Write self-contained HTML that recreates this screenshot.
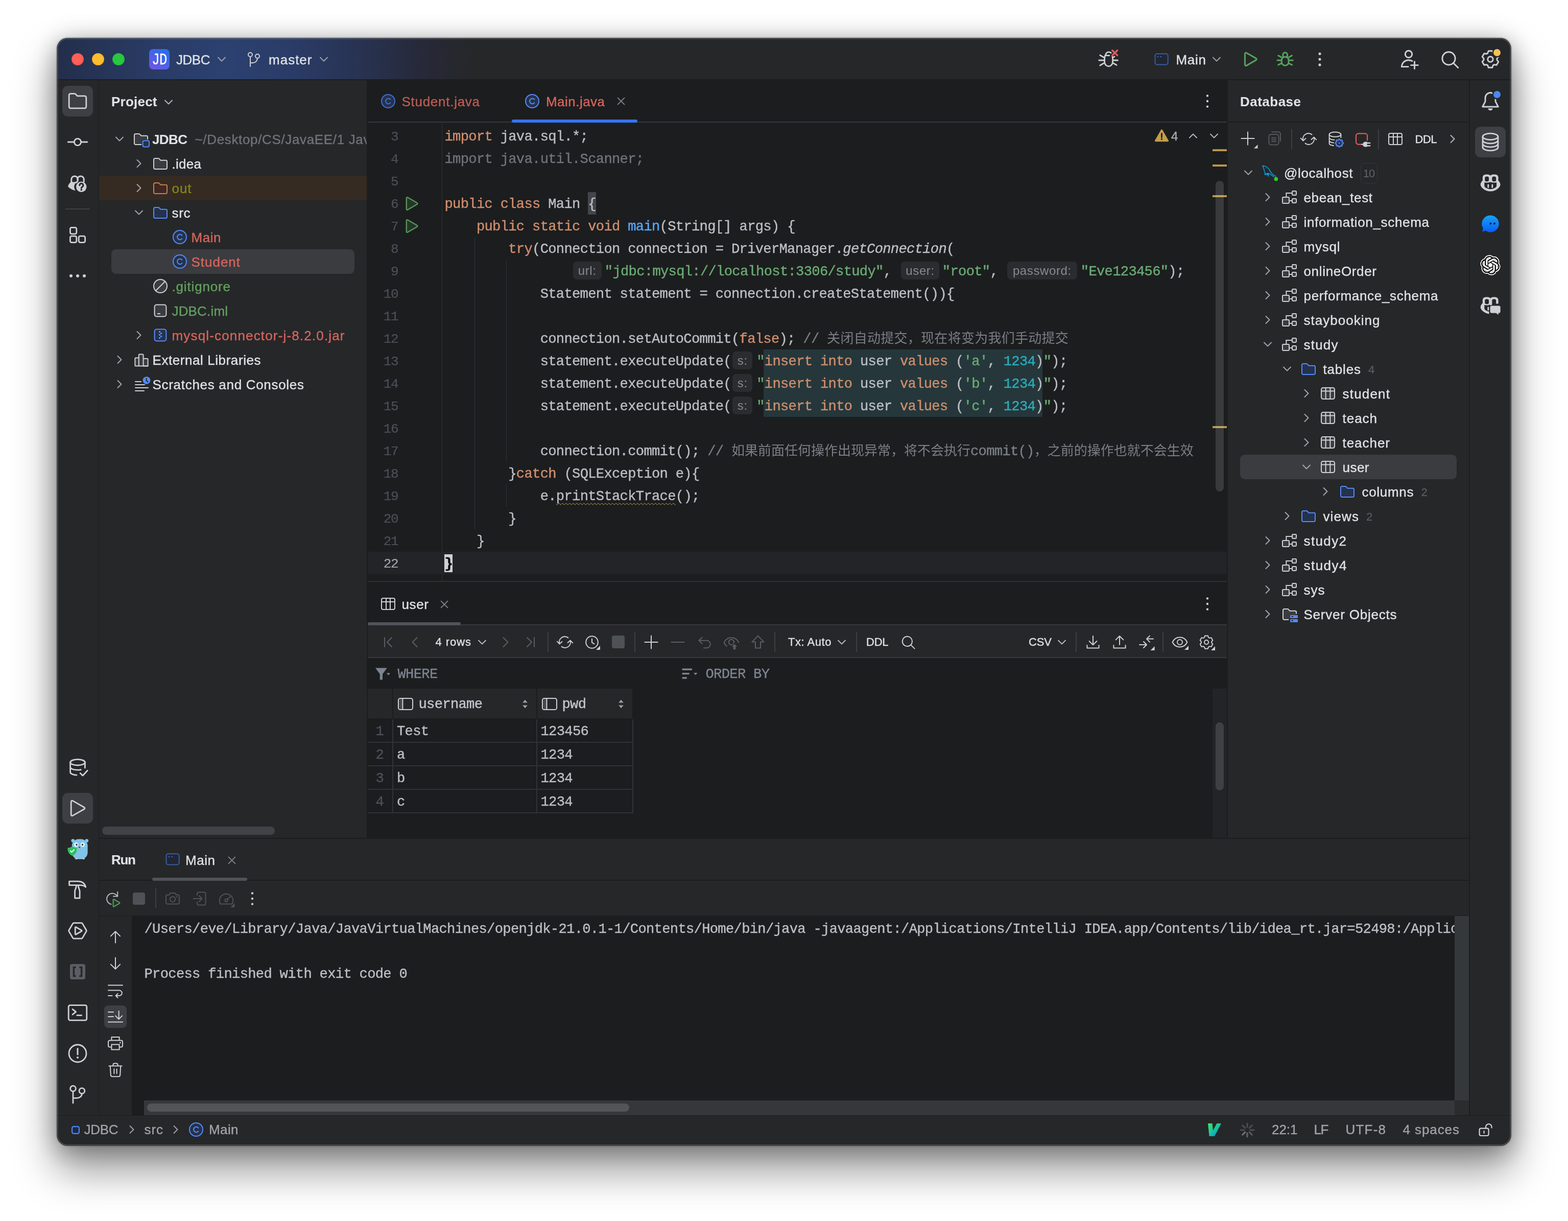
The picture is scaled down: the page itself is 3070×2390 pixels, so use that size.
<!DOCTYPE html>
<html lang="en"><head><meta charset="utf-8"><title>JDBC – Main.java</title>
<style>
html,body{margin:0;padding:0;background:#fff;}
body{width:3070px;height:2390px;overflow:hidden;position:relative;}
#win{position:absolute;left:112px;top:75px;width:2846px;height:2167px;border-radius:20px;overflow:hidden;background:#262729;
 box-shadow:0 0 0 1px rgba(0,0,0,.6),0 0 5px rgba(0,0,0,.3),0 0 50px rgba(0,0,0,.16),0 44px 80px 6px rgba(0,0,0,.40),0 12px 40px rgba(0,0,0,.16);}
#in{will-change:transform;position:absolute;left:-112px;top:-75px;width:3070px;height:2390px;}
.a{position:absolute;display:block;white-space:pre;margin:0;padding:0;}
.ui{font-family:"Liberation Sans","Noto Sans CJK SC",sans-serif;font-size:26px;color:#DFE1E5;}
.b{font-weight:bold;}
.mono{font-family:"Liberation Mono","Noto Sans CJK SC",monospace;font-size:27.2px;letter-spacing:-0.72px;color:#BCBEC4;-webkit-text-stroke:0.4px currentColor;}
.k{color:#CF8E6D}.s{color:#6AAB73}.n{color:#2AACB8}.m{color:#56A8F5}.c{color:#7A7E85}.g{color:#6F737A}
.ui{-webkit-text-stroke:0.36px currentColor;}
.cl{height:44px;line-height:44px;}
.cl i{font-style:italic;}
.hint{display:inline-block;box-sizing:border-box;height:35px;line-height:36px;vertical-align:middle;position:relative;top:-2.5px;background:#2A2C30;border-radius:7px;color:#868A91;font-family:"Liberation Sans",sans-serif;font-size:24px;letter-spacing:.6px;text-align:center;-webkit-text-stroke:0;}
.cj{font-size:26px;letter-spacing:0;-webkit-text-stroke:0;}
.cj12{letter-spacing:.28px;}
.wavy{text-decoration:underline wavy #C9A24D 1.2px;text-underline-offset:5px;text-decoration-skip-ink:none;}
svg.a{overflow:visible;}
#rim{position:absolute;left:0;top:0;width:2846px;height:2167px;border-radius:20px;box-shadow:inset 0 0 0 1.5px rgba(255,255,255,.2);pointer-events:none;}
.ui.b{-webkit-text-stroke:0.1px currentColor;}

</style></head>
<body>
<div id="win"><div id="in">
<div class="a " style="left:112px;top:75px;width:2846px;height:81px;background:#262729;background:linear-gradient(90deg,#232E4B 0px,#2A3C67 200px,#2C4170 330px,#2A3B66 470px,#283250 600px,#27293A 710px,#262729 810px);"></div>
<div class="a " style="left:112px;top:155px;width:2846px;height:2px;background:#1C1D1F;"></div>
<div class="a " style="left:112px;top:157px;width:81px;height:2026px;background:#262729;"></div>
<div class="a " style="left:193px;top:157px;width:1px;height:2026px;background:#1C1D1F;"></div>
<div class="a " style="left:194px;top:157px;width:524px;height:1483px;background:#262729;"></div>
<div class="a " style="left:718px;top:157px;width:2px;height:1483px;background:#1C1D1F;"></div>
<div class="a " style="left:720px;top:157px;width:1682px;height:1483px;background:#1C1D1F;"></div>
<div class="a " style="left:2402px;top:157px;width:2px;height:1483px;background:#1C1D1F;"></div>
<div class="a " style="left:2404px;top:157px;width:473px;height:1483px;background:#262729;"></div>
<div class="a " style="left:2876px;top:157px;width:2px;height:2026px;background:#1C1D1F;"></div>
<div class="a " style="left:2878px;top:157px;width:80px;height:2026px;background:#262729;"></div>
<div class="a " style="left:194px;top:1640px;width:2682px;height:2px;background:#1C1D1F;"></div>
<div class="a " style="left:194px;top:1642px;width:2682px;height:541px;background:#262729;"></div>
<div class="a " style="left:112px;top:2183px;width:2846px;height:1px;background:#1C1D1F;"></div>
<div class="a " style="left:112px;top:2184px;width:2846px;height:58px;background:#262729;"></div>
<div class="a " style="left:140px;top:104px;width:24px;height:24px;background:#FE5F57;border-radius:50%;box-shadow:inset 0 0 0 1px rgba(0,0,0,.12);"></div>
<div class="a " style="left:180px;top:104px;width:24px;height:24px;background:#FEBC2E;border-radius:50%;box-shadow:inset 0 0 0 1px rgba(0,0,0,.12);"></div>
<div class="a " style="left:220px;top:104px;width:24px;height:24px;background:#28C840;border-radius:50%;box-shadow:inset 0 0 0 1px rgba(0,0,0,.12);"></div>
<div class="a " style="left:292px;top:96px;width:40px;height:40px;border-radius:8px;background:linear-gradient(35deg,#6B57E3 10%,#2470EB 95%);"></div>
<span class="a mono" id="t1" style="top:97.5px;line-height:40px;height:40px;left:292px;color:#fff;width:40px;text-align:center;font-size:32px;transform:scaleX(.8);-webkit-text-stroke:.3px #fff;">JD</span>
<span class="a ui" id="t2" style="top:92.5px;line-height:48px;height:48px;left:345px;letter-spacing:-0.469px;">JDBC</span>
<svg class="a" style="left:418.0px;top:100.0px;" width="32" height="32" viewBox="0 0 16 16" fill="none"><path d="M4.5 6.25L8 9.75L11.5 6.25" stroke="#9DA0A8" stroke-width="1" fill="none" stroke-linecap="round" stroke-linejoin="round" /></svg>
<svg class="a" style="left:477.0px;top:96.0px;" width="40" height="40" viewBox="0 0 20 20" fill="none"><circle cx="6.5" cy="5.5" r="2" stroke="#CED0D6"/><circle cx="13.5" cy="7" r="2" stroke="#CED0D6"/><path d="M6.5 7.5V17M6.5 13.5h2.5a4.5 4.5 0 0 0 4.5-4.5" stroke="#CED0D6" stroke-linecap="round"/></svg>
<span class="a ui" id="t3" style="top:92.5px;line-height:48px;height:48px;left:526px;letter-spacing:1.006px;">master</span>
<svg class="a" style="left:618.0px;top:100.0px;" width="32" height="32" viewBox="0 0 16 16" fill="none"><path d="M4.5 6.25L8 9.75L11.5 6.25" stroke="#9DA0A8" stroke-width="1" fill="none" stroke-linecap="round" stroke-linejoin="round" /></svg>
<svg class="a" style="left:2149.0px;top:96.0px;" width="40" height="40" viewBox="0 0 20 20" fill="none"><path d="M7.400 6.300C7 7.300 6.800 8.300 6.800 9.500V12.400a4 4.500 0 0 0 8 0V9.500c0-.7-.1-1.300-.3-1.900M7.600 6.300c.3-1.900 1.600-3.400 3.300-3.400.9 0 1.600.3 2.200.8M7.600 6.300H11.500M2.400 6L5.800 8M1.400 11H5.800M2.400 16L5.800 14M16 11h3.700M15.700 14l2.900 1.700M15.800 7.900l.7-.5" stroke="#CED0D6" stroke-width="1.400" stroke-linecap="round" fill="none"/><path d="M14.400 1.300l4.900 4.800M19.300 1.300l-4.900 4.800" stroke="#E0555B" stroke-width="1.800" stroke-linecap="round"/></svg>
<svg class="a" style="left:2258.0px;top:100.0px;" width="32" height="32" viewBox="0 0 16 16" fill="none"><rect x="1.75" y="2.6" width="12.6" height="10.6" rx="2" stroke="#3A5C9E" fill="#212634"/><path d="M3.8 5.5H5.3M6.6 5.5H8.2" stroke="#3A5C9E"/></svg>
<span class="a ui" id="t4" style="top:92.5px;line-height:48px;height:48px;left:2302.5px;letter-spacing:0.714px;">Main</span>
<svg class="a" style="left:2366.0px;top:100.0px;" width="32" height="32" viewBox="0 0 16 16" fill="none"><path d="M4.5 6.25L8 9.75L11.5 6.25" stroke="#9DA0A8" stroke-width="1" fill="none" stroke-linecap="round" stroke-linejoin="round" /></svg>
<svg class="a" style="left:2428.0px;top:96.0px;" width="40" height="40" viewBox="0 0 20 20" fill="none"><path d="M4.750 4.600a1 1 0 0 1 1.500-.87l9.300 5.350a1 1 0 0 1 0 1.740l-9.300 5.350a1 1 0 0 1-1.500-.87z" stroke="#55A35D" stroke-width="1.500" stroke-linejoin="round"/></svg>
<svg class="a" style="left:2496.0px;top:96.0px;" width="40" height="40" viewBox="0 0 20 20" fill="none"><path d="M6.650 10.900a3.430 3.300 0 0 1 6.860 0v1.800a3.430 3.400 0 0 1-6.860 0zM7.950 7.700V5.550a2.130 2.130 0 0 1 4.260 0V7.700" stroke="#55A35D" stroke-width="1.500"/><path d="M3.350 6.350L6.250 7.950M2.500 11.050H5.900M3.350 15.500L6.250 14.050M16.800 6.350L13.900 7.950M17.650 11.050H14.250M16.800 15.500L13.900 14.050" stroke="#55A35D" stroke-width="1.500" stroke-linecap="round"/></svg>
<svg class="a" style="left:2564.0px;top:96.0px;" width="40" height="40" viewBox="0 0 20 20" fill="none"><circle cx="10" cy="4.65" r="1.280" fill="#CED0D6"/><circle cx="10" cy="10" r="1.280" fill="#CED0D6"/><circle cx="10" cy="15.45" r="1.280" fill="#CED0D6"/></svg>
<svg class="a" style="left:2740.0px;top:97.0px;" width="40" height="40" viewBox="0 0 20 20" fill="none"><circle cx="9" cy="4.500" r="3.350" stroke="#CED0D6" stroke-width="1.450"/><path d="M8.600 16.800H2.250c0-3.600 2.800-6.450 6.750-6.450 1.300 0 2.500.3 3.500.85M11.300 15.300h6.900M14.750 11.850v6.900" stroke="#CED0D6" stroke-width="1.450" stroke-linecap="round"/></svg>
<svg class="a" style="left:2818.5px;top:96.5px;" width="40" height="40" viewBox="0 0 20 20" fill="none"><circle cx="8.750" cy="8.700" r="6.300" stroke="#CED0D6" stroke-width="1.450"/><path d="M13.200 13.150l4.700 4.600" stroke="#CED0D6" stroke-width="1.450" stroke-linecap="round"/></svg>
<svg class="a" style="left:2898.0px;top:96.0px;" width="40" height="40" viewBox="0 0 20 20" fill="none"><path d="M8.13 1.91L11.87 1.91L12.64 4.06L13.82 4.74L16.07 4.34L17.94 7.57L16.46 9.32L16.46 10.68L17.94 12.43L16.07 15.66L13.82 15.26L12.64 15.94L11.87 18.09L8.13 18.09L7.36 15.94L6.18 15.26L3.93 15.66L2.06 12.43L3.54 10.68L3.54 9.32L2.06 7.57L3.93 4.34L6.18 4.74L7.36 4.06Z" stroke="#CED0D6" stroke-width="1.45" stroke-linejoin="round"/><circle cx="10" cy="10" r="2.6" stroke="#CED0D6" stroke-width="1.45"/></svg>
<div class="a " style="left:2924px;top:96px;width:14px;height:14px;background:#F2C057;border-radius:50%;box-shadow:0 0 0 2.500px #262729;"></div>
<div class="a " style="left:122px;top:168px;width:60px;height:60px;background:#3D3F44;border-radius:11px;"></div>
<svg class="a" style="left:132.0px;top:178.0px;" width="40" height="40" viewBox="0 0 20 20" fill="none"><path d="M1.6 4.2a1.5 1.5 0 0 1 1.5-1.5h3.9a1.5 1.5 0 0 1 1.1.5l1.5 1.7h7.3a1.5 1.5 0 0 1 1.5 1.5v9a1.5 1.5 0 0 1-1.5 1.5H3.1a1.5 1.5 0 0 1-1.5-1.5z" stroke="#CED0D6" stroke-width="1.4" fill="none" stroke-linecap="round" stroke-linejoin="round" /></svg>
<svg class="a" style="left:132.0px;top:258.0px;" width="40" height="40" viewBox="0 0 20 20" fill="none"><path d="M0.6 10H6.2M13.8 10H19.4" stroke="#CED0D6" stroke-width="1.4" fill="none" stroke-linecap="round" stroke-linejoin="round" /><circle cx="10" cy="10" r="3.3" stroke="#CED0D6" stroke-width="1.4"/></svg>
<svg class="a" style="left:132.0px;top:339.0px;" width="40" height="40" viewBox="0 0 20 20" fill="none"><path d="M3.9 9.4V5.9a2.9 2.9 0 0 1 2.9-2.9h.5a2.9 2.9 0 0 1 2.9 2.9v.6a2.9 2.9 0 0 1-2.9 2.9z" stroke="#CED0D6" stroke-width="1.5" fill="none" stroke-linecap="round" stroke-linejoin="round" /><path d="M16.1 8.3V5.9a2.9 2.9 0 0 0-2.9-2.9h-.5a2.9 2.9 0 0 0-2.9 2.9" stroke="#CED0D6" stroke-width="1.5" fill="none" stroke-linecap="round" stroke-linejoin="round" /><path d="M3.2 8.6c-1.7 1.6-2.6 3.2-2.6 4.6 1.8 1.9 4.3 3.2 7.4 3.8a5.4 5.4 0 0 1-.3-6.9l-1 .2z" fill="#CED0D6"/><circle cx="13.6" cy="13.4" r="5.1" fill="#CED0D6"/><path d="M11.9 11.9a1.75 1.75 0 1 1 2.6 1.5c-.6.35-.85.6-.85 1.2" stroke="#262729" stroke-width="1.5" fill="none" stroke-linecap="round"/><circle cx="13.65" cy="16.3" r=".9" fill="#262729"/></svg>
<div class="a " style="left:128px;top:408px;width:48px;height:2px;background:#3E4044;"></div>
<svg class="a" style="left:132.0px;top:440.0px;" width="40" height="40" viewBox="0 0 20 20" fill="none"><rect x="2.7" y="2.7" width="6.2" height="6.2" rx="1.4" stroke="#CED0D6" stroke-width="1.4"/><rect x="2.7" y="11.1" width="6.2" height="6.2" rx="1.4" stroke="#CED0D6" stroke-width="1.4"/><rect x="11.1" y="11.1" width="6.2" height="6.2" rx="1.4" stroke="#CED0D6" stroke-width="1.4"/></svg>
<div class="a " style="left:136px;top:537px;width:6px;height:6px;background:#CED0D6;border-radius:50%;"></div>
<div class="a " style="left:149px;top:537px;width:6px;height:6px;background:#CED0D6;border-radius:50%;"></div>
<div class="a " style="left:162px;top:537px;width:6px;height:6px;background:#CED0D6;border-radius:50%;"></div>
<svg class="a" style="left:133.5px;top:1482.5px;" width="40" height="40" viewBox="0 0 20 20" fill="none"><ellipse cx="9" cy="4.6" rx="7.2" ry="2.9" stroke="#CED0D6" stroke-width="1.4"/><path d="M1.8 4.6v9.6c0 1.5 2.6 2.8 6.2 2.9M16.2 4.6v5.4M1.8 9.3c0 1.5 3 2.8 7.2 2.8 1.2 0 2.3-.1 3.2-.3M11.6 15.2l2.4 2.4 4.6-5" stroke="#CED0D6" stroke-width="1.4" fill="none" stroke-linecap="round" stroke-linejoin="round" /></svg>
<div class="a " style="left:122px;top:1552px;width:60px;height:60px;background:#3D3F44;border-radius:11px;"></div>
<svg class="a" style="left:131.5px;top:1561.5px;" width="40" height="40" viewBox="0 0 20 20" fill="none"><path d="M3.6 3.6a1 1 0 0 1 1.5-.9l11.3 6.4a1 1 0 0 1 0 1.8L5.1 17.3a1 1 0 0 1-1.5-.9z" stroke="#CED0D6" stroke-width="1.4" fill="none" stroke-linecap="round" stroke-linejoin="round" /></svg>
<svg class="a" style="left:131.5px;top:1641.0px;" width="41" height="41" viewBox="0 0 20.5 20.5" fill="none"><circle cx="5.400" cy="2.300" r="1.700" fill="#7FC4EA"/><circle cx="18.900" cy="2.300" r="1.700" fill="#7FC4EA"/><rect x="4.400" y="0.700" width="15.400" height="19.700" rx="6.500" fill="#7FC4EA"/><ellipse cx="8.700" cy="20" rx="1.300" ry=".5" fill="#E8D9B8"/><ellipse cx="15.800" cy="20" rx="1.300" ry=".5" fill="#E8D9B8"/><circle cx="8.600" cy="6.100" r="2.100" fill="#F2F4F6"/><circle cx="14.900" cy="6.100" r="2.100" fill="#F2F4F6"/><circle cx="9" cy="6.200" r=".9" fill="#4a3b36"/><circle cx="14.700" cy="6.200" r=".9" fill="#4a3b36"/><ellipse cx="11.700" cy="9.100" rx="1.300" ry=".8" fill="#C9A77C"/><ellipse cx="11.700" cy="8.700" rx=".8" ry=".55" fill="#4a2c22"/><path d="M0.100 9.300c1.900 0 3.500-.6 4.650-1.600 1.150 1 2.750 1.600 4.650 1.600 0 4.200-1.600 6.500-4.650 7.700C1.700 15.800.1 13.500.1 9.300z" fill="#2DBE5D"/><path d="M3.100 12.300l1.100 1.100 2.300-2.200" stroke="#E8FFF0" stroke-width="1.100" fill="none" stroke-linecap="round"/></svg>
<svg class="a" style="left:132.0px;top:1722.0px;" width="40" height="40" viewBox="0 0 20 20" fill="none"><path d="M1.800 1.600H10.500C14.500 1.600 16.900 3.600 17.900 7.150C16.300 5.900 14.400 5.350 12.500 5.350H1.800zM8.600 5.350V7L7.300 10.900V18H12.050V10.900L10.750 7V5.350" stroke="#CED0D6" stroke-width="1.4" fill="none" stroke-linecap="round" stroke-linejoin="round" /></svg>
<svg class="a" style="left:132.0px;top:1802.0px;" width="40" height="40" viewBox="0 0 20 20" fill="none"><path d="M6.300 2.350h7.400a1.200 1.200 0 0 1 1.040.600l3.750 6.400a1.200 1.200 0 0 1 0 1.200l-3.750 6.400a1.200 1.200 0 0 1-1.040.600H6.300a1.200 1.200 0 0 1-1.040-.600L1.510 10.550a1.200 1.200 0 0 1 0-1.200l3.750-6.400a1.200 1.200 0 0 1 1.040-.600z" stroke="#CED0D6" stroke-width="1.4" fill="none" stroke-linecap="round" stroke-linejoin="round" /><path d="M7.650 6.800a.5.500 0 0 1 .75-.430l5.400 3.150a.5.500 0 0 1 0 .860l-5.400 3.150a.5.500 0 0 1-.75-.430z" stroke="#CED0D6" stroke-width="1.4" fill="none" stroke-linecap="round" stroke-linejoin="round" /></svg>
<div class="a " style="left:137px;top:1887px;width:30px;height:30px;background:#5A5D63;border-radius:4px;"></div>
<svg class="a" style="left:132.0px;top:1882.0px;" width="40" height="40" viewBox="0 0 20 20" fill="none"><path d="M8.300 5.700H6.200v8.600h2.100M11.700 5.700h2.100v8.600h-2.100" stroke="#262729" stroke-width="1.700" fill="none"/></svg>
<svg class="a" style="left:132.0px;top:1962.0px;" width="40" height="40" viewBox="0 0 20 20" fill="none"><rect x="1.100" y="2.800" width="17.800" height="14.800" rx="1.600" stroke="#CED0D6" stroke-width="1.4"/><path d="M5 6.700l3.300 2.600L5 11.900M9.400 12.700h4.400" stroke="#CED0D6" stroke-width="1.4" fill="none" stroke-linecap="round" stroke-linejoin="round" /></svg>
<svg class="a" style="left:132.0px;top:2042.0px;" width="40" height="40" viewBox="0 0 20 20" fill="none"><circle cx="10" cy="10" r="8.500" stroke="#CED0D6" stroke-width="1.4"/><path d="M10 5.300v5.700" stroke="#CED0D6" stroke-width="1.5" fill="none" stroke-linecap="round" stroke-linejoin="round" /><circle cx="10" cy="14" r="1" fill="#CED0D6"/></svg>
<svg class="a" style="left:132.0px;top:2122.0px;" width="40" height="40" viewBox="0 0 20 20" fill="none"><circle cx="5.500" cy="4.400" r="2.700" stroke="#CED0D6" stroke-width="1.4"/><circle cx="14.200" cy="6.600" r="2.700" stroke="#CED0D6" stroke-width="1.4"/><path d="M5.500 7.100V18.500M5.500 13.700h3.500c3 0 5.200-1.700 5.200-4.400" stroke="#CED0D6" stroke-width="1.4" fill="none" stroke-linecap="round" stroke-linejoin="round" /></svg>
<svg class="a" style="left:2898.0px;top:178.0px;" width="40" height="40" viewBox="0 0 20 20" fill="none"><path d="M2.350 15.500H17.650L15 10.300V7a5 5.250 0 0 0-10 0v3.300z" stroke="#CED0D6" stroke-width="1.45" fill="none" stroke-linecap="round" stroke-linejoin="round" /><path d="M7.700 17.100h4.600a2.300 2.050 0 0 1-4.600 0z" fill="#CED0D6"/></svg>
<div class="a " style="left:2924px;top:178px;width:14px;height:14px;background:#4A88F5;border-radius:50%;box-shadow:0 0 0 2.500px #262729;"></div>
<div class="a " style="left:2888px;top:248px;width:60px;height:60px;background:#3D3F44;border-radius:11px;"></div>
<svg class="a" style="left:2898.0px;top:257.5px;" width="40" height="40" viewBox="0 0 20 20" fill="none"><ellipse cx="10" cy="4.700" rx="7.500" ry="3.100" stroke="#CED0D6" stroke-width="1.4"/><path d="M2.500 4.700v10.600c0 1.700 3.400 3.100 7.500 3.100s7.500-1.400 7.500-3.100V4.700M2.500 8.300c0 1.700 3.400 3.100 7.500 3.100s7.500-1.400 7.500-3.100M2.500 11.800c0 1.700 3.400 3.100 7.500 3.100s7.500-1.400 7.500-3.100" stroke="#CED0D6" stroke-width="1.4" fill="none" stroke-linecap="round" stroke-linejoin="round" /></svg>
<svg class="a" style="left:2898.0px;top:338.5px;" width="40" height="40" viewBox="0 0 20 20" fill="none"><path d="M2.600 7C1.100 8.400.350 9.800.350 11.200c0 2.300 4.150 6.600 9.700 6.600s9.700-4.300 9.700-6.600c0-1.400-.750-2.800-2.250-4.200z" fill="#CED0D6"/><path d="M4.150 8.800H16.050V12.300c0 1.600-2.600 3.300-5.950 3.300s-5.950-1.700-5.950-3.300z" fill="#262729"/><rect x="2.400" y="1.200" width="8.200" height="8" rx="3" fill="#CED0D6"/><rect x="9.500" y="1.200" width="8.300" height="8" rx="3" fill="#CED0D6"/><rect x="4.600" y="3.250" width="3.950" height="4.900" rx="1.600" fill="#262729"/><rect x="11.650" y="3.250" width="3.950" height="4.900" rx="1.600" fill="#262729"/><rect x="7.200" y="10.700" width="1.400" height="3.750" rx=".7" fill="#CED0D6"/><rect x="11.200" y="10.700" width="1.400" height="3.750" rx=".7" fill="#CED0D6"/></svg>
<svg class="a" style="left:2898.0px;top:417.5px;" width="40" height="40" viewBox="0 0 20 20" fill="none"><defs><linearGradient id="cg" x1="0" y1="0" x2="0" y2="1"><stop offset="0" stop-color="#14A3FA"/><stop offset="1" stop-color="#0A5CF5"/></linearGradient></defs><path d="M10 1.700a8.300 8.300 0 1 1-4.700 15.100L1.900 17.900l1.100-3.400A8.300 8.300 0 0 1 10 1.700z" fill="url(#cg)"/><circle cx="10.200" cy="9.800" r="1" fill="#123"/><circle cx="14" cy="9.800" r="1" fill="#123"/></svg>
<svg class="a" style="left:2898.3px;top:498.5px;" width="40" height="40" viewBox="0 0 24 24" fill="none"><g transform="translate(1.200 1.200) scale(.9)"><path d="M22.2819 9.8211a5.9847 5.9847 0 0 0-.5157-4.9108 6.0462 6.0462 0 0 0-6.5098-2.9A6.0651 6.0651 0 0 0 4.9807 4.1818a5.9847 5.9847 0 0 0-3.9977 2.9 6.0462 6.0462 0 0 0 .7427 7.0966 5.98 5.98 0 0 0 .511 4.9107 6.051 6.051 0 0 0 6.5146 2.9001A5.9847 5.9847 0 0 0 13.2599 24a6.0557 6.0557 0 0 0 5.7718-4.2058 5.9894 5.9894 0 0 0 3.9977-2.9001 6.0557 6.0557 0 0 0-.7475-7.0729zm-9.022 12.6081a4.4755 4.4755 0 0 1-2.8764-1.0408l.1419-.0804 4.7783-2.7582a.7948.7948 0 0 0 .3927-.6813v-6.7369l2.02 1.1686a.071.071 0 0 1 .038.052v5.5826a4.504 4.504 0 0 1-4.4945 4.4944zm-9.6607-4.1254a4.4708 4.4708 0 0 1-.5346-3.0137l.142.0852 4.783 2.7582a.7712.7712 0 0 0 .7806 0l5.8428-3.3685v2.3324a.0804.0804 0 0 1-.0332.0615L9.74 19.9502a4.4992 4.4992 0 0 1-6.1408-1.6464zM2.3408 7.8956a4.485 4.485 0 0 1 2.3655-1.9728V11.6a.7664.7664 0 0 0 .3879.6765l5.8144 3.3543-2.0201 1.1685a.0757.0757 0 0 1-.071 0l-4.8303-2.7865A4.504 4.504 0 0 1 2.3408 7.872zm16.5963 3.8558L13.1038 8.364 15.1192 7.2a.0757.0757 0 0 1 .071 0l4.8303 2.7913a4.4944 4.4944 0 0 1-.6765 8.1042v-5.6772a.79.79 0 0 0-.407-.667zm2.0107-3.0231l-.142-.0852-4.7735-2.7818a.7759.7759 0 0 0-.7854 0L9.409 9.2297V6.8974a.0662.0662 0 0 1 .0284-.0615l4.8303-2.7866a4.4992 4.4992 0 0 1 6.6802 4.66zM8.3065 12.863l-2.02-1.1638a.0804.0804 0 0 1-.038-.0567V6.0742a4.4992 4.4992 0 0 1 7.3757-3.4537l-.142.0805L8.704 5.459a.7948.7948 0 0 0-.3927.6813zm1.0976-2.3654l2.602-1.4998 2.6069 1.4998v2.9994l-2.5974 1.4997-2.6067-1.4997Z" fill="#fff" stroke="#fff" stroke-width="2.200" stroke-linejoin="round"/><path d="M12 2l8.700 5v10l-8.700 5-8.700-5V7z" fill="#fff"/><path d="M22.2819 9.8211a5.9847 5.9847 0 0 0-.5157-4.9108 6.0462 6.0462 0 0 0-6.5098-2.9A6.0651 6.0651 0 0 0 4.9807 4.1818a5.9847 5.9847 0 0 0-3.9977 2.9 6.0462 6.0462 0 0 0 .7427 7.0966 5.98 5.98 0 0 0 .511 4.9107 6.051 6.051 0 0 0 6.5146 2.9001A5.9847 5.9847 0 0 0 13.2599 24a6.0557 6.0557 0 0 0 5.7718-4.2058 5.9894 5.9894 0 0 0 3.9977-2.9001 6.0557 6.0557 0 0 0-.7475-7.0729zm-9.022 12.6081a4.4755 4.4755 0 0 1-2.8764-1.0408l.1419-.0804 4.7783-2.7582a.7948.7948 0 0 0 .3927-.6813v-6.7369l2.02 1.1686a.071.071 0 0 1 .038.052v5.5826a4.504 4.504 0 0 1-4.4945 4.4944zm-9.6607-4.1254a4.4708 4.4708 0 0 1-.5346-3.0137l.142.0852 4.783 2.7582a.7712.7712 0 0 0 .7806 0l5.8428-3.3685v2.3324a.0804.0804 0 0 1-.0332.0615L9.74 19.9502a4.4992 4.4992 0 0 1-6.1408-1.6464zM2.3408 7.8956a4.485 4.485 0 0 1 2.3655-1.9728V11.6a.7664.7664 0 0 0 .3879.6765l5.8144 3.3543-2.0201 1.1685a.0757.0757 0 0 1-.071 0l-4.8303-2.7865A4.504 4.504 0 0 1 2.3408 7.872zm16.5963 3.8558L13.1038 8.364 15.1192 7.2a.0757.0757 0 0 1 .071 0l4.8303 2.7913a4.4944 4.4944 0 0 1-.6765 8.1042v-5.6772a.79.79 0 0 0-.407-.667zm2.0107-3.0231l-.142-.0852-4.7735-2.7818a.7759.7759 0 0 0-.7854 0L9.409 9.2297V6.8974a.0662.0662 0 0 1 .0284-.0615l4.8303-2.7866a4.4992 4.4992 0 0 1 6.6802 4.66zM8.3065 12.863l-2.02-1.1638a.0804.0804 0 0 1-.038-.0567V6.0742a4.4992 4.4992 0 0 1 7.3757-3.4537l-.142.0805L8.704 5.459a.7948.7948 0 0 0-.3927.6813zm1.0976-2.3654l2.602-1.4998 2.6069 1.4998v2.9994l-2.5974 1.4997-2.6067-1.4997Z" fill="#0d0d0d"/></g></svg>
<svg class="a" style="left:2898.0px;top:578.5px;" width="40" height="40" viewBox="0 0 20 20" fill="none"><path d="M2.600 7C1.100 8.400.350 9.800.350 11.200c0 2.100 3.500 5.900 8.400 6.500V8.800z" fill="#CED0D6"/><path d="M4.150 8.800H9v6.700c-2.800-.3-4.850-1.800-4.850-3.200z" fill="#262729"/><rect x="2.400" y="1.200" width="8.200" height="8" rx="3" fill="#CED0D6"/><path d="M9.500 9.200V4.200a3 3 0 0 1 3-3h2.300a3 3 0 0 1 3 3v3.600h-2.200V4.800a1.550 1.550 0 0 0-1.550-1.550h-0.850a1.550 1.550 0 0 0-1.550 1.550v4.400z" fill="#CED0D6"/><rect x="4.600" y="3.250" width="3.950" height="4.900" rx="1.600" fill="#262729"/><rect x="7.200" y="10.700" width="1.400" height="3.750" rx=".7" fill="#CED0D6"/><path d="M11.300 9.750h7a1.500 1.500 0 0 1 1.500 1.500v4.100a1.500 1.500 0 0 1-1.500 1.500h-.5v1.900l-2.200-1.900h-4.300a1.500 1.500 0 0 1-1.500-1.500v-4.100a1.500 1.500 0 0 1 1.500-1.500z" fill="#CED0D6" stroke="#262729" stroke-width="1.600" paint-order="stroke"/></svg>
<span class="a ui b" id="t5" style="top:174.5px;line-height:48px;height:48px;left:218px;letter-spacing:0.224px;">Project</span>
<svg class="a" style="left:314.0px;top:184.0px;" width="32" height="32" viewBox="0 0 16 16" fill="none"><path d="M4.5 6.25L8 9.75L11.5 6.25" stroke="#B4B8BF" stroke-width="1" fill="none" stroke-linecap="round" stroke-linejoin="round" /></svg>
<div class="a " style="left:194px;top:344px;width:524px;height:48px;background:#352B22;"></div>
<div class="a " style="left:218px;top:488px;width:476px;height:48px;background:#3B3C40;border-radius:9px;"></div>
<svg class="a" style="left:218.0px;top:255.5px;" width="32" height="32" viewBox="0 0 16 16" fill="none"><path d="M4.5 6.25L8 9.75L11.5 6.25" stroke="#A3A6AD" stroke-width="1" fill="none" stroke-linecap="round" stroke-linejoin="round" /></svg>
<svg class="a" style="left:259.5px;top:255.5px;" width="32" height="32" viewBox="0 0 16 16" fill="none"><path d="M1.5 4.2a1.200 1.200 0 0 1 1.200-1.200h3.300a1 1 0 0 1 .75.33L8.200 4.900h5.100a1.200 1.200 0 0 1 1.200 1.200v7.400H2.700a1.200 1.200 0 0 1-1.200-1.200z" fill="#3A3C40"/><path d="M14.500 8.600V6.100a1.200 1.200 0 0 0-1.200-1.200H8.200L6.750 3.330A1 1 0 0 0 6 3H2.700a1.200 1.200 0 0 0-1.200 1.200v8.100a1.200 1.200 0 0 0 1.200 1.200h5.700" stroke="#CED0D6" fill="none" stroke-linejoin="round" stroke-linecap="round"/><rect x="9.800" y="9.600" width="6.200" height="6.200" rx="1.500" fill="#25324D" stroke="#262729" stroke-width="2.200"/><rect x="9.800" y="9.600" width="6.200" height="6.200" rx="1.500" fill="#25324D" stroke="#548AF7"/></svg>
<span class="a ui b" id="t6" style="top:249.0px;line-height:48px;height:48px;left:298px;letter-spacing:-0.599px;">JDBC</span>
<span class="a ui" id="t7" style="top:249.0px;line-height:48px;height:48px;left:381.5px;color:#6F737A;width:336px;overflow:hidden;letter-spacing:.65px;">~/Desktop/CS/JavaEE/1 JavaSE</span>
<svg class="a" style="left:255.5px;top:303.5px;" width="32" height="32" viewBox="0 0 16 16" fill="none"><path d="M6.25 4.5L9.75 8L6.25 11.5" stroke="#A3A6AD" stroke-width="1" fill="none" stroke-linecap="round" stroke-linejoin="round" /></svg>
<svg class="a" style="left:298.0px;top:303.5px;" width="32" height="32" viewBox="0 0 16 16" fill="none"><path d="M1.5 4.2a1.2 1.2 0 0 1 1.2-1.2h3.3a1 1 0 0 1 .75.33L8.2 4.9h5.1a1.2 1.2 0 0 1 1.2 1.2v6.2a1.2 1.2 0 0 1-1.2 1.2H2.7a1.2 1.2 0 0 1-1.2-1.2z" stroke="#CED0D6" fill="#3A3C40" stroke-linejoin="round"/></svg>
<span class="a ui" id="t8" style="top:297.0px;line-height:48px;height:48px;left:336.5px;letter-spacing:0.277px;">.idea</span>
<svg class="a" style="left:255.5px;top:351.5px;" width="32" height="32" viewBox="0 0 16 16" fill="none"><path d="M6.25 4.5L9.75 8L6.25 11.5" stroke="#A3A6AD" stroke-width="1" fill="none" stroke-linecap="round" stroke-linejoin="round" /></svg>
<svg class="a" style="left:298.0px;top:351.5px;" width="32" height="32" viewBox="0 0 16 16" fill="none"><path d="M1.5 4.2a1.2 1.2 0 0 1 1.2-1.2h3.3a1 1 0 0 1 .75.33L8.2 4.9h5.1a1.2 1.2 0 0 1 1.2 1.2v6.2a1.2 1.2 0 0 1-1.2 1.2H2.7a1.2 1.2 0 0 1-1.2-1.2z" stroke="#C77D55" fill="#3E2821" stroke-linejoin="round"/></svg>
<span class="a ui" id="t9" style="top:345.0px;line-height:48px;height:48px;left:336.5px;color:#85851A;letter-spacing:0.922px;">out</span>
<svg class="a" style="left:255.5px;top:399.5px;" width="32" height="32" viewBox="0 0 16 16" fill="none"><path d="M4.5 6.25L8 9.75L11.5 6.25" stroke="#A3A6AD" stroke-width="1" fill="none" stroke-linecap="round" stroke-linejoin="round" /></svg>
<svg class="a" style="left:298.0px;top:399.5px;" width="32" height="32" viewBox="0 0 16 16" fill="none"><path d="M1.5 4.2a1.2 1.2 0 0 1 1.2-1.2h3.3a1 1 0 0 1 .75.33L8.2 4.9h5.1a1.2 1.2 0 0 1 1.2 1.2v6.2a1.2 1.2 0 0 1-1.2 1.2H2.7a1.2 1.2 0 0 1-1.2-1.2z" stroke="#548AF7" fill="#25324D" stroke-linejoin="round"/></svg>
<span class="a ui" id="t10" style="top:393.0px;line-height:48px;height:48px;left:336.5px;letter-spacing:0.664px;">src</span>
<svg class="a" style="left:336.0px;top:447.5px;" width="32" height="32" viewBox="0 0 16 16" fill="none"><circle cx="8" cy="8" r="6.5" stroke="#548AF7" fill="#25324D"/><path d="M10.2 9.6A2.6 2.6 0 1 1 10.2 6.4" stroke="#548AF7" stroke-width="1" fill="none" stroke-linecap="round"/></svg>
<span class="a ui" id="t11" style="top:441.0px;line-height:48px;height:48px;left:374.5px;color:#D6655C;letter-spacing:0.547px;">Main</span>
<svg class="a" style="left:336.0px;top:495.5px;" width="32" height="32" viewBox="0 0 16 16" fill="none"><circle cx="8" cy="8" r="6.5" stroke="#548AF7" fill="#25324D"/><path d="M10.2 9.6A2.6 2.6 0 1 1 10.2 6.4" stroke="#548AF7" stroke-width="1" fill="none" stroke-linecap="round"/></svg>
<span class="a ui" id="t12" style="top:489.0px;line-height:48px;height:48px;left:374.5px;color:#D6655C;letter-spacing:0.977px;">Student</span>
<svg class="a" style="left:298.0px;top:543.5px;" width="32" height="32" viewBox="0 0 16 16" fill="none"><circle cx="8" cy="8" r="6.500" stroke="#CED0D6" fill="#3A3C40"/><path d="M3.600 12.400L12.400 3.600" stroke="#CED0D6"/></svg>
<span class="a ui" id="t13" style="top:537.0px;line-height:48px;height:48px;left:336.5px;color:#62A05F;letter-spacing:0.837px;">.gitignore</span>
<svg class="a" style="left:298.0px;top:591.5px;" width="32" height="32" viewBox="0 0 16 16" fill="none"><rect x="2.300" y="2.300" width="11.400" height="11.400" rx="2" stroke="#CED0D6" fill="#3A3C40"/><path d="M5 11h3" stroke="#CED0D6"/></svg>
<span class="a ui" id="t14" style="top:585.0px;line-height:48px;height:48px;left:336.5px;color:#62A05F;letter-spacing:0.165px;">JDBC.iml</span>
<svg class="a" style="left:255.5px;top:639.5px;" width="32" height="32" viewBox="0 0 16 16" fill="none"><path d="M6.25 4.5L9.75 8L6.25 11.5" stroke="#A3A6AD" stroke-width="1" fill="none" stroke-linecap="round" stroke-linejoin="round" /></svg>
<svg class="a" style="left:298.0px;top:639.5px;" width="32" height="32" viewBox="0 0 16 16" fill="none"><rect x="2.300" y="2.300" width="11.400" height="11.400" rx="2" stroke="#548AF7" fill="#25324D"/><path d="M6.500 4h1.500v1.500H6.500zM8 5.500h1.500V7H8zM6.500 7h1.500v1.500H6.500zM8 8.500h1.500V10H8zM6.500 10h1.500v1.500H6.500z" fill="#548AF7"/></svg>
<span class="a ui" id="t15" style="top:633.0px;line-height:48px;height:48px;left:336.5px;color:#D6655C;letter-spacing:1.162px;">mysql-connector-j-8.2.0.jar</span>
<svg class="a" style="left:218.0px;top:687.5px;" width="32" height="32" viewBox="0 0 16 16" fill="none"><path d="M6.25 4.5L9.75 8L6.25 11.5" stroke="#A3A6AD" stroke-width="1" fill="none" stroke-linecap="round" stroke-linejoin="round" /></svg>
<svg class="a" style="left:261.0px;top:687.5px;" width="32" height="32" viewBox="0 0 16 16" fill="none"><path d="M1.700 14.200V6.800a.6.600 0 0 1 .6-.6h2.500a.6.600 0 0 1 .6.600v7.400M5.400 14.200V3.400a.6.600 0 0 1 .6-.6h3.200a.6.600 0 0 1 .6.600v10.800M9.800 14.200V7.600a.6.600 0 0 1 .6-.6h3.300a.6.600 0 0 1 .6.600v6.600z" stroke="#CED0D6" fill="#3A3C40" stroke-linejoin="round"/><path d="M1.700 14.200h12.600" stroke="#CED0D6"/></svg>
<span class="a ui" id="t16" style="top:681.0px;line-height:48px;height:48px;left:298.5px;letter-spacing:0.57px;">External Libraries</span>
<svg class="a" style="left:218.0px;top:735.5px;" width="32" height="32" viewBox="0 0 16 16" fill="none"><path d="M6.25 4.5L9.75 8L6.25 11.5" stroke="#A3A6AD" stroke-width="1" fill="none" stroke-linecap="round" stroke-linejoin="round" /></svg>
<svg class="a" style="left:261.5px;top:735.5px;" width="32" height="32" viewBox="0 0 16 16" fill="none"><path d="M1.500 5.500h5.500M1.500 8.500h9M1.500 11.500h12.500M1.500 14.500h8.500" stroke="#CED0D6" stroke-linecap="round"/><circle cx="12.500" cy="4.300" r="3.700" fill="#548AF7"/><path d="M12.300 2.300v2.200l1.500 1.200" stroke="#1C1D1F" stroke-width=".9" fill="none" stroke-linecap="round"/></svg>
<span class="a ui" id="t17" style="top:729.0px;line-height:48px;height:48px;left:298.5px;letter-spacing:0.699px;">Scratches and Consoles</span>
<div class="a " style="left:200px;top:1618px;width:338px;height:16px;background:#414347;border-radius:8px;"></div>
<svg class="a" style="left:744.0px;top:182.0px;" width="32" height="32" viewBox="0 0 16 16" fill="none"><circle cx="8" cy="8" r="6.5" stroke="#3F6FD1" fill="#25324D"/><path d="M10.2 9.6A2.6 2.6 0 1 1 10.2 6.4" stroke="#3F6FD1" stroke-width="1" fill="none" stroke-linecap="round"/></svg>
<span class="a ui" id="t18" style="top:174.5px;line-height:48px;height:48px;left:786.5px;color:#B95D55;letter-spacing:0.722px;">Student.java</span>
<svg class="a" style="left:1026.0px;top:182.0px;" width="32" height="32" viewBox="0 0 16 16" fill="none"><circle cx="8" cy="8" r="6.5" stroke="#548AF7" fill="#25324D"/><path d="M10.2 9.6A2.6 2.6 0 1 1 10.2 6.4" stroke="#548AF7" stroke-width="1" fill="none" stroke-linecap="round"/></svg>
<span class="a ui" id="t19" style="top:174.5px;line-height:48px;height:48px;left:1069px;color:#D6655C;letter-spacing:0.465px;">Main.java</span>
<svg class="a" style="left:1200.0px;top:182.0px;" width="32" height="32" viewBox="0 0 16 16" fill="none"><path d="M4.8 4.8L11.2 11.2M11.2 4.8L4.8 11.2" stroke="#7E8288" stroke-width="1" fill="none" stroke-linecap="round" stroke-linejoin="round" /></svg>
<div class="a " style="left:720px;top:238px;width:1682px;height:2px;background:#34363A;"></div>
<div class="a " style="left:1002px;top:234px;width:246px;height:6px;background:#3574F0;border-radius:3px;"></div>
<svg class="a" style="left:2344.0px;top:178.0px;" width="40" height="40" viewBox="0 0 20 20" fill="none"><circle cx="10" cy="4.7" r="1.1" fill="#CED0D6"/><circle cx="10" cy="10" r="1.1" fill="#CED0D6"/><circle cx="10" cy="15.3" r="1.1" fill="#CED0D6"/></svg>
<div class="a " style="left:865px;top:240px;width:1px;height:898px;background:#2E3033;"></div>
<div class="a " style="left:720px;top:1080px;width:1682px;height:44px;background:#232428;"></div>
<span class="a mono" id="t20" style="top:245.8px;line-height:44px;height:44px;right:2290.7px;color:#4B5059;font-size:26px;letter-spacing:-1.300px;-webkit-text-stroke:.2px currentColor;">3</span>
<span class="a mono" id="t21" style="top:289.8px;line-height:44px;height:44px;right:2290.7px;color:#4B5059;font-size:26px;letter-spacing:-1.300px;-webkit-text-stroke:.2px currentColor;">4</span>
<span class="a mono" id="t22" style="top:333.8px;line-height:44px;height:44px;right:2290.7px;color:#4B5059;font-size:26px;letter-spacing:-1.300px;-webkit-text-stroke:.2px currentColor;">5</span>
<span class="a mono" id="t23" style="top:377.8px;line-height:44px;height:44px;right:2290.7px;color:#4B5059;font-size:26px;letter-spacing:-1.300px;-webkit-text-stroke:.2px currentColor;">6</span>
<span class="a mono" id="t24" style="top:421.8px;line-height:44px;height:44px;right:2290.7px;color:#4B5059;font-size:26px;letter-spacing:-1.300px;-webkit-text-stroke:.2px currentColor;">7</span>
<span class="a mono" id="t25" style="top:465.8px;line-height:44px;height:44px;right:2290.7px;color:#4B5059;font-size:26px;letter-spacing:-1.300px;-webkit-text-stroke:.2px currentColor;">8</span>
<span class="a mono" id="t26" style="top:509.79999999999995px;line-height:44px;height:44px;right:2290.7px;color:#4B5059;font-size:26px;letter-spacing:-1.300px;-webkit-text-stroke:.2px currentColor;">9</span>
<span class="a mono" id="t27" style="top:553.8px;line-height:44px;height:44px;right:2290.7px;color:#4B5059;font-size:26px;letter-spacing:-1.300px;-webkit-text-stroke:.2px currentColor;">10</span>
<span class="a mono" id="t28" style="top:597.8px;line-height:44px;height:44px;right:2290.7px;color:#4B5059;font-size:26px;letter-spacing:-1.300px;-webkit-text-stroke:.2px currentColor;">11</span>
<span class="a mono" id="t29" style="top:641.8px;line-height:44px;height:44px;right:2290.7px;color:#4B5059;font-size:26px;letter-spacing:-1.300px;-webkit-text-stroke:.2px currentColor;">12</span>
<span class="a mono" id="t30" style="top:685.8px;line-height:44px;height:44px;right:2290.7px;color:#4B5059;font-size:26px;letter-spacing:-1.300px;-webkit-text-stroke:.2px currentColor;">13</span>
<span class="a mono" id="t31" style="top:729.8px;line-height:44px;height:44px;right:2290.7px;color:#4B5059;font-size:26px;letter-spacing:-1.300px;-webkit-text-stroke:.2px currentColor;">14</span>
<span class="a mono" id="t32" style="top:773.8px;line-height:44px;height:44px;right:2290.7px;color:#4B5059;font-size:26px;letter-spacing:-1.300px;-webkit-text-stroke:.2px currentColor;">15</span>
<span class="a mono" id="t33" style="top:817.8px;line-height:44px;height:44px;right:2290.7px;color:#4B5059;font-size:26px;letter-spacing:-1.300px;-webkit-text-stroke:.2px currentColor;">16</span>
<span class="a mono" id="t34" style="top:861.8px;line-height:44px;height:44px;right:2290.7px;color:#4B5059;font-size:26px;letter-spacing:-1.300px;-webkit-text-stroke:.2px currentColor;">17</span>
<span class="a mono" id="t35" style="top:905.8px;line-height:44px;height:44px;right:2290.7px;color:#4B5059;font-size:26px;letter-spacing:-1.300px;-webkit-text-stroke:.2px currentColor;">18</span>
<span class="a mono" id="t36" style="top:949.8px;line-height:44px;height:44px;right:2290.7px;color:#4B5059;font-size:26px;letter-spacing:-1.300px;-webkit-text-stroke:.2px currentColor;">19</span>
<span class="a mono" id="t37" style="top:993.8px;line-height:44px;height:44px;right:2290.7px;color:#4B5059;font-size:26px;letter-spacing:-1.300px;-webkit-text-stroke:.2px currentColor;">20</span>
<span class="a mono" id="t38" style="top:1037.8px;line-height:44px;height:44px;right:2290.7px;color:#4B5059;font-size:26px;letter-spacing:-1.300px;-webkit-text-stroke:.2px currentColor;">21</span>
<span class="a mono" id="t39" style="top:1081.8px;line-height:44px;height:44px;right:2290.7px;color:#A1A3AB;font-size:26px;letter-spacing:-1.300px;-webkit-text-stroke:.2px currentColor;">22</span>
<svg class="a" style="left:786.5px;top:379.5px;" width="37" height="37" viewBox="0 0 16 16" fill="none"><path d="M3.800 3.200a.6.600 0 0 1 .9-.5l8.200 4.800a.6.600 0 0 1 0 1L4.700 13.300a.6.600 0 0 1-.9-.5z" stroke="#57965C" fill="#253627" stroke-linejoin="round"/></svg>
<svg class="a" style="left:786.5px;top:423.5px;" width="37" height="37" viewBox="0 0 16 16" fill="none"><path d="M3.800 3.200a.6.600 0 0 1 .9-.5l8.200 4.800a.6.600 0 0 1 0 1L4.700 13.300a.6.600 0 0 1-.9-.5z" stroke="#57965C" fill="#253627" stroke-linejoin="round"/></svg>
<div class="a " style="left:929px;top:464px;width:1px;height:572px;background:#2F3134;"></div>
<div class="a " style="left:991px;top:508px;width:1px;height:396px;background:#2F3134;"></div>
<div class="a " style="left:991px;top:948px;width:1px;height:44px;background:#2F3134;"></div>
<div class="a " style="left:1495px;top:684px;width:546px;height:132px;background:#25373B;"></div>
<div class="a " style="left:1151px;top:376px;width:15.6px;height:44px;background:#43454A;"></div>
<div class="a " style="left:870px;top:1085px;width:15.6px;height:35px;background:#CED0D6;"></div>
<div class="a mono cl" style="left:870.5px;top:246.1px;"><span class="k">import</span> java.sql.*;</div>
<div class="a mono cl" style="left:870.5px;top:290.1px;"><span class="g">import java.util.Scanner;</span></div>
<div class="a mono cl" style="left:870.5px;top:378.1px;"><span class="k">public class</span> Main {</div>
<div class="a mono cl" style="left:870.5px;top:422.1px;">    <span class="k">public static void</span> <span class="m">main</span>(String[] args) {</div>
<div class="a mono cl" style="left:870.5px;top:466.1px;">        <span class="k">try</span>(Connection connection = DriverManager.<i>getConnection</i>(</div>
<div class="a mono cl" style="left:870.5px;top:510.1px;">                <span class="hint" style="width:56px;margin-left:1.6px;margin-right:6.2px;">url:</span><span class="s">"jdbc:mysql://localhost:3306/study"</span>, <span class="hint" style="width:75.3px;margin-left:3px;margin-right:5.7px;">user:</span><span class="s">"root"</span>, <span class="hint" style="width:137px;margin-left:2.2px;margin-right:7px;">password:</span><span class="s">"Eve123456"</span>);</div>
<div class="a mono cl" style="left:870.5px;top:554.1px;">            Statement statement = connection.createStatement()){</div>
<div class="a mono cl" style="left:870.5px;top:642.1px;">            connection.setAutoCommit(<span class="k">false</span>); <span class="c">// </span><span class="c cj cj12">关闭自动提交，现在将变为我们手动提交</span></div>
<div class="a mono cl" style="left:870.5px;top:686.1px;">            statement.executeUpdate(<span class="hint" style="width:39.2px;margin-left:2.2px;margin-right:7.9px;">s:</span><span class="s">"</span><span class="k">insert into</span> user <span class="k">values</span> (<span class="s">'a'</span>, <span class="n">1234</span>)<span class="s">"</span>);</div>
<div class="a mono cl" style="left:870.5px;top:730.1px;">            statement.executeUpdate(<span class="hint" style="width:39.2px;margin-left:2.2px;margin-right:7.9px;">s:</span><span class="s">"</span><span class="k">insert into</span> user <span class="k">values</span> (<span class="s">'b'</span>, <span class="n">1234</span>)<span class="s">"</span>);</div>
<div class="a mono cl" style="left:870.5px;top:774.1px;">            statement.executeUpdate(<span class="hint" style="width:39.2px;margin-left:2.2px;margin-right:7.9px;">s:</span><span class="s">"</span><span class="k">insert into</span> user <span class="k">values</span> (<span class="s">'c'</span>, <span class="n">1234</span>)<span class="s">"</span>);</div>
<div class="a mono cl" style="left:870.5px;top:862.1px;">            connection.commit(); <span class="c">// </span><span class="c cj">如果前面任何操作出现异常，将不会执行</span><span class="c">commit()</span><span class="c cj">，之前的操作也就不会生效</span></div>
<div class="a mono cl" style="left:870.5px;top:906.1px;">        }<span class="k">catch</span> (SQLException e){</div>
<div class="a mono cl" style="left:870.5px;top:950.1px;">            e.<span class="wavy">printStackTrace</span>();</div>
<div class="a mono cl" style="left:870.5px;top:994.1px;">        }</div>
<div class="a mono cl" style="left:870.5px;top:1038.1px;">    }</div>
<div class="a mono cl" style="left:870.5px;top:1082.1px;"><span style="color:#000;font-weight:bold">}</span></div>
<svg class="a" style="left:2261.0px;top:252.0px;" width="27" height="27" viewBox="0 0 16 16" fill="none"><path d="M8 1.800L15 14H1z" fill="#C29E4A" stroke="#C29E4A" stroke-width="2" stroke-linejoin="round"/><path d="M8 5.500v4.500" stroke="#1C1D1F" stroke-width="1.600" stroke-linecap="round"/><circle cx="8" cy="12.100" r=".95" fill="#1C1D1F"/></svg>
<span class="a ui" id="t40" style="top:242.5px;line-height:48px;height:48px;left:2293px;color:#A8ADB5;font-size:24px;">4</span>
<svg class="a" style="left:2320.0px;top:250.0px;" width="32" height="32" viewBox="0 0 16 16" fill="none"><path d="M4.5 9.75L8 6.25L11.5 9.75" stroke="#B4B8BF" stroke-width="1" fill="none" stroke-linecap="round" stroke-linejoin="round" /></svg>
<svg class="a" style="left:2361.0px;top:250.0px;" width="32" height="32" viewBox="0 0 16 16" fill="none"><path d="M4.5 6.25L8 9.75L11.5 6.25" stroke="#B4B8BF" stroke-width="1" fill="none" stroke-linecap="round" stroke-linejoin="round" /></svg>
<div class="a " style="left:2374px;top:292px;width:28px;height:4px;background:#B8964A;"></div>
<div class="a " style="left:2374px;top:322px;width:28px;height:4px;background:#B8964A;"></div>
<div class="a " style="left:2374px;top:382px;width:28px;height:4px;background:#B8964A;"></div>
<div class="a " style="left:2374px;top:834px;width:28px;height:4px;background:#B8964A;"></div>
<div class="a " style="left:2380px;top:354px;width:16px;height:608px;background:rgba(255,255,255,.13);border-radius:8px;"></div>
<div class="a " style="left:720px;top:1137px;width:1682px;height:2px;background:#2E3033;"></div>
<svg class="a" style="left:744.0px;top:1166.0px;" width="32" height="32" viewBox="0 0 16 16" fill="none"><rect x="1.5" y="2.5" width="13" height="11" rx="1.5" stroke="#CED0D6"/><path d="M1.5 6H14.5M6 2.5V13.5M10 2.5V13.5" stroke="#CED0D6"/></svg>
<span class="a ui" id="t41" style="top:1158.5px;line-height:48px;height:48px;left:786.5px;letter-spacing:0.641px;">user</span>
<svg class="a" style="left:854.0px;top:1166.5px;" width="32" height="32" viewBox="0 0 16 16" fill="none"><path d="M4.8 4.8L11.2 11.2M11.2 4.8L4.8 11.2" stroke="#7E8288" stroke-width="1" fill="none" stroke-linecap="round" stroke-linejoin="round" /></svg>
<svg class="a" style="left:2344.0px;top:1162.0px;" width="40" height="40" viewBox="0 0 20 20" fill="none"><circle cx="10" cy="4.7" r="1.1" fill="#CED0D6"/><circle cx="10" cy="10" r="1.1" fill="#CED0D6"/><circle cx="10" cy="15.3" r="1.1" fill="#CED0D6"/></svg>
<div class="a " style="left:720px;top:1222px;width:1682px;height:2px;background:#37393D;"></div>
<div class="a " style="left:720px;top:1224px;width:1682px;height:62px;background:#262729;"></div>
<div class="a " style="left:720px;top:1286px;width:1682px;height:2px;background:#37393D;"></div>
<div class="a " style="left:720px;top:1218px;width:182px;height:6px;background:#505358;border-radius:3px;"></div>
<svg class="a" style="left:744.0px;top:1240.5px;" width="32" height="32" viewBox="0 0 16 16" fill="none"><path d="M4.500 3.500v9M11.500 3.500L7 8l4.500 4.500" stroke="#5A5D63" stroke-width="1" fill="none" stroke-linecap="round" stroke-linejoin="round"/></svg>
<svg class="a" style="left:796.5px;top:1240.5px;" width="32" height="32" viewBox="0 0 16 16" fill="none"><path d="M9.800 3.500L5.300 8l4.500 4.500" stroke="#5A5D63" stroke-width="1" fill="none" stroke-linecap="round" stroke-linejoin="round"/></svg>
<span class="a ui" id="t42" style="top:1233.0px;line-height:48px;height:48px;left:852.5px;font-size:22px;letter-spacing:0.941px;">4 rows</span>
<svg class="a" style="left:928.0px;top:1241.0px;" width="32" height="32" viewBox="0 0 16 16" fill="none"><path d="M4.5 6.25L8 9.75L11.5 6.25" stroke="#B4B8BF" stroke-width="1" fill="none" stroke-linecap="round" stroke-linejoin="round" /></svg>
<svg class="a" style="left:973.0px;top:1240.5px;" width="32" height="32" viewBox="0 0 16 16" fill="none"><path d="M6.200 3.500L10.700 8l-4.500 4.500" stroke="#5A5D63" stroke-width="1" fill="none" stroke-linecap="round" stroke-linejoin="round"/></svg>
<svg class="a" style="left:1023.0px;top:1240.5px;" width="32" height="32" viewBox="0 0 16 16" fill="none"><path d="M4.500 3.500L9 8l-4.500 4.500M11.500 3.500v9" stroke="#5A5D63" stroke-width="1" fill="none" stroke-linecap="round" stroke-linejoin="round"/></svg>
<div class="a " style="left:1072px;top:1237px;width:2px;height:39px;background:#3C3E43;"></div>
<div class="a " style="left:1242px;top:1237px;width:2px;height:39px;background:#3C3E43;"></div>
<div class="a " style="left:1515.5px;top:1237px;width:2px;height:39px;background:#3C3E43;"></div>
<div class="a " style="left:2105.5px;top:1237px;width:2px;height:39px;background:#3C3E43;"></div>
<div class="a " style="left:2276px;top:1237px;width:2px;height:39px;background:#3C3E43;"></div>
<svg class="a" style="left:1090.0px;top:1240.5px;" width="32" height="32" viewBox="0 0 16 16" fill="none"><path d="M11.200 3.700A5.400 5.400 0 0 0 2.700 9.500M4.800 12.300A5.400 5.400 0 0 0 13.300 6.500" stroke="#CED0D6" stroke-width="1" fill="none" stroke-linecap="round" stroke-linejoin="round" /><path d="M0.400 7.300L2.700 9.700L5.200 7.500M15.600 8.700L13.300 6.300L10.800 8.500" stroke="#CED0D6" stroke-width="1" fill="none" stroke-linecap="round" stroke-linejoin="round" /></svg>
<svg class="a" style="left:1143.5px;top:1240.5px;" width="32" height="32" viewBox="0 0 16 16" fill="none"><circle cx="7.500" cy="8" r="5.900" stroke="#CED0D6"/><path d="M7.500 4.800V8.300l2.200 1.400" stroke="#CED0D6" stroke-width="1" fill="none" stroke-linecap="round" stroke-linejoin="round"/><path d="M15.500 11.500v4h-4z" fill="#CED0D6"/></svg>
<div class="a " style="left:1198px;top:1244px;width:25px;height:25px;background:#4E5155;border-radius:4px;"></div>
<svg class="a" style="left:1259.0px;top:1240.5px;" width="32" height="32" viewBox="0 0 16 16" fill="none"><path d="M8 1.700v12.600M1.700 8h12.600" stroke="#CED0D6" stroke-width="1" fill="none" stroke-linecap="round" stroke-linejoin="round"/></svg>
<svg class="a" style="left:1311.0px;top:1240.5px;" width="32" height="32" viewBox="0 0 16 16" fill="none"><path d="M1.700 8h12.600" stroke="#5A5D63" stroke-width="1" fill="none" stroke-linecap="round" stroke-linejoin="round"/></svg>
<svg class="a" style="left:1364.0px;top:1240.5px;" width="32" height="32" viewBox="0 0 16 16" fill="none"><path d="M5.400 3.400L2.200 6.400l3.200 3M2.500 6.400h7.300a3.600 3.600 0 0 1 0 7.200H7" stroke="#5A5D63" stroke-width="1" fill="none" stroke-linecap="round" stroke-linejoin="round"/></svg>
<svg class="a" style="left:1416.0px;top:1240.5px;" width="32" height="32" viewBox="0 0 16 16" fill="none"><path d="M0.800 8.300C2.200 5.300 4.800 3.600 8 3.600c3.200 0 5.800 1.700 7.200 4.700M3.500 12C2.400 11.200 1.500 10 .8 8.300" stroke="#5A5D63" stroke-width="1" fill="none" stroke-linecap="round" stroke-linejoin="round"/><circle cx="8" cy="8" r="2.600" stroke="#5A5D63"/><path d="M11 9.200l3.600 3.600h-2v2.700H9.400v-2.700h-2z" fill="#5A5D63" stroke="#262729" stroke-width=".8"/></svg>
<svg class="a" style="left:1468.0px;top:1240.5px;" width="32" height="32" viewBox="0 0 16 16" fill="none"><path d="M8 1.800L2.200 7.800h3.300v6h5v-6h3.300z" stroke="#5A5D63" stroke-width="1" fill="none" stroke-linecap="round" stroke-linejoin="round"/></svg>
<span class="a ui" id="t43" style="top:1233.0px;line-height:48px;height:48px;left:1543px;font-size:22px;letter-spacing:0.54px;">Tx: Auto</span>
<svg class="a" style="left:1632.0px;top:1241.0px;" width="32" height="32" viewBox="0 0 16 16" fill="none"><path d="M4.5 6.25L8 9.75L11.5 6.25" stroke="#B4B8BF" stroke-width="1" fill="none" stroke-linecap="round" stroke-linejoin="round" /></svg>
<div class="a " style="left:1676px;top:1237px;width:2px;height:39px;background:#3C3E43;"></div>
<span class="a ui" id="t44" style="top:1233.0px;line-height:48px;height:48px;left:1696px;font-size:22px;letter-spacing:-0.258px;">DDL</span>
<svg class="a" style="left:1761.5px;top:1240.5px;" width="32" height="32" viewBox="0 0 16 16" fill="none"><circle cx="7.200" cy="7.200" r="4.800" stroke="#CED0D6"/><path d="M10.800 10.800l3.500 3.500" stroke="#CED0D6" stroke-width="1" fill="none" stroke-linecap="round" stroke-linejoin="round"/></svg>
<span class="a ui" id="t45" style="top:1233.0px;line-height:48px;height:48px;left:2014px;font-size:22px;letter-spacing:-0.125px;">CSV</span>
<svg class="a" style="left:2062.5px;top:1241.0px;" width="32" height="32" viewBox="0 0 16 16" fill="none"><path d="M4.5 6.25L8 9.75L11.5 6.25" stroke="#B4B8BF" stroke-width="1" fill="none" stroke-linecap="round" stroke-linejoin="round" /></svg>
<svg class="a" style="left:2123.5px;top:1240.5px;" width="32" height="32" viewBox="0 0 16 16" fill="none"><path d="M8 2v8.500M4.300 7L8 10.700 11.700 7M2.200 11v2.800h11.600V11" stroke="#CED0D6" stroke-width="1" fill="none" stroke-linecap="round" stroke-linejoin="round"/></svg>
<svg class="a" style="left:2175.5px;top:1240.5px;" width="32" height="32" viewBox="0 0 16 16" fill="none"><path d="M8 10.500V2M4.300 5.700L8 2l3.700 3.700M2.200 11v2.800h11.600V11" stroke="#CED0D6" stroke-width="1" fill="none" stroke-linecap="round" stroke-linejoin="round"/></svg>
<svg class="a" style="left:2228.5px;top:1240.5px;" width="32" height="32" viewBox="0 0 16 16" fill="none"><path d="M8.500 4.800h6M11 1.800L8 4.800l3 3M1 10.500h7M5 7.500l3 3-3 3" stroke="#CED0D6" stroke-width="1" fill="none" stroke-linecap="round" stroke-linejoin="round"/><path d="M15.800 12v4h-4z" fill="#CED0D6"/></svg>
<svg class="a" style="left:2294.0px;top:1240.5px;" width="32" height="32" viewBox="0 0 16 16" fill="none"><path d="M0.800 8C2.200 5 4.800 3.300 8 3.300c3.200 0 5.800 1.700 7.200 4.700C13.800 11 11.200 12.700 8 12.700 4.800 12.700 2.200 11 .8 8z" stroke="#CED0D6" stroke-width="1" fill="none" stroke-linecap="round" stroke-linejoin="round"/><circle cx="8" cy="8" r="2.500" stroke="#CED0D6"/><path d="M16.500 11.500v4h-4z" fill="#CED0D6"/></svg>
<svg class="a" style="left:2346px;top:1240.5px;" width="32" height="32" viewBox="0 0 16 16" fill="none"><g transform="scale(.78) translate(.3 .3)"><path d="M8.13 1.91L11.87 1.91L12.64 4.06L13.82 4.74L16.07 4.34L17.94 7.57L16.46 9.32L16.46 10.68L17.94 12.43L16.07 15.66L13.82 15.26L12.64 15.94L11.87 18.09L8.13 18.09L7.36 15.94L6.18 15.26L3.93 15.66L2.06 12.43L3.54 10.68L3.54 9.32L2.06 7.57L3.93 4.34L6.18 4.74L7.36 4.06Z" stroke="#CED0D6" stroke-width="1.25" stroke-linejoin="round"/><circle cx="10" cy="10" r="2.6" stroke="#CED0D6" stroke-width="1.25"/></g><path d="M16.500 12v4h-4z" fill="#CED0D6"/></svg>
<svg class="a" style="left:732.5px;top:1303.0px;" width="32" height="32" viewBox="0 0 16 16" fill="none"><path d="M1 2.200h11.400L8 8.200v5.600H5.400V8.200z" fill="#7C8490"/><path d="M11.800 7.200h3.800l-1.900 2.200z" fill="#7C8490"/></svg>
<span class="a mono" id="t46" style="top:1297.5px;line-height:44px;height:44px;left:778.5px;color:#7C8490;">WHERE</span>
<svg class="a" style="left:1333.5px;top:1303.0px;" width="32" height="32" viewBox="0 0 16 16" fill="none"><path d="M0.800 3.600h9.600M0.800 7.800h7M0.800 12h4.600" stroke="#7C8490" stroke-width="1.700"/><path d="M12 7h3.800l-1.900 2.200z" fill="#7C8490"/></svg>
<span class="a mono" id="t47" style="top:1297.5px;line-height:44px;height:44px;left:1381.5px;color:#7C8490;">ORDER BY</span>
<div class="a " style="left:720px;top:1348px;width:48px;height:58px;background:#262729;"></div>
<div class="a " style="left:770px;top:1348px;width:280px;height:58px;background:#262729;"></div>
<div class="a " style="left:1052px;top:1348px;width:186px;height:58px;background:#262729;"></div>
<svg class="a" style="left:778.0px;top:1362.0px;" width="32" height="32" viewBox="0 0 16 16" fill="none"><rect x="1" y="2.500" width="14" height="11" rx="1.800" stroke="#CED0D6" fill="#262729"/><path d="M1.800 3h3.400v10H1.800z" fill="#46484D"/><path d="M5.200 2.500v11" stroke="#CED0D6"/></svg>
<span class="a mono" id="t48" style="top:1356.5px;line-height:44px;height:44px;left:819.5px;color:#C4C6CC;">username</span>
<svg class="a" style="left:1060.0px;top:1362.0px;" width="32" height="32" viewBox="0 0 16 16" fill="none"><rect x="1" y="2.500" width="14" height="11" rx="1.800" stroke="#CED0D6" fill="#262729"/><path d="M1.800 3h3.400v10H1.800z" fill="#46484D"/><path d="M5.200 2.500v11" stroke="#CED0D6"/></svg>
<span class="a mono" id="t49" style="top:1356.5px;line-height:44px;height:44px;left:1100.5px;color:#C4C6CC;">pwd</span>
<svg class="a" style="left:1012.0px;top:1361.5px;" width="32" height="32" viewBox="0 0 16 16" fill="none"><path d="M5.600 6.700L8 3.900l2.400 2.800zM5.600 9.300L8 12.100l2.400-2.800z" fill="#9DA0A8"/></svg>
<svg class="a" style="left:1200.0px;top:1361.5px;" width="32" height="32" viewBox="0 0 16 16" fill="none"><path d="M5.600 6.700L8 3.900l2.400 2.800zM5.600 9.300L8 12.100l2.400-2.800z" fill="#9DA0A8"/></svg>
<div class="a " style="left:720px;top:1452px;width:519px;height:2px;background:#303236;"></div>
<div class="a " style="left:720px;top:1498px;width:519px;height:2px;background:#303236;"></div>
<div class="a " style="left:720px;top:1544px;width:519px;height:2px;background:#303236;"></div>
<div class="a " style="left:720px;top:1590px;width:519px;height:2px;background:#303236;"></div>
<div class="a " style="left:768px;top:1408px;width:2px;height:184px;background:#303236;"></div>
<div class="a " style="left:1050px;top:1408px;width:2px;height:184px;background:#303236;"></div>
<div class="a " style="left:1238px;top:1408px;width:2px;height:184px;background:#303236;"></div>
<span class="a mono" id="t50" style="top:1409.5px;line-height:44px;height:44px;right:2319px;color:#4B5059;">1</span>
<span class="a mono" id="t51" style="top:1409.5px;line-height:44px;height:44px;left:777px;">Test</span>
<span class="a mono" id="t52" style="top:1409.5px;line-height:44px;height:44px;left:1058.5px;">123456</span>
<span class="a mono" id="t53" style="top:1455.5px;line-height:44px;height:44px;right:2319px;color:#4B5059;">2</span>
<span class="a mono" id="t54" style="top:1455.5px;line-height:44px;height:44px;left:777px;">a</span>
<span class="a mono" id="t55" style="top:1455.5px;line-height:44px;height:44px;left:1058.5px;">1234</span>
<span class="a mono" id="t56" style="top:1501.5px;line-height:44px;height:44px;right:2319px;color:#4B5059;">3</span>
<span class="a mono" id="t57" style="top:1501.5px;line-height:44px;height:44px;left:777px;">b</span>
<span class="a mono" id="t58" style="top:1501.5px;line-height:44px;height:44px;left:1058.5px;">1234</span>
<span class="a mono" id="t59" style="top:1547.5px;line-height:44px;height:44px;right:2319px;color:#4B5059;">4</span>
<span class="a mono" id="t60" style="top:1547.5px;line-height:44px;height:44px;left:777px;">c</span>
<span class="a mono" id="t61" style="top:1547.5px;line-height:44px;height:44px;left:1058.5px;">1234</span>
<div class="a " style="left:2374px;top:1348px;width:28px;height:292px;background:#232427;"></div>
<div class="a " style="left:2380px;top:1414px;width:16px;height:133px;background:rgba(255,255,255,.13);border-radius:8px;"></div>
<span class="a ui b" id="t62" style="top:174.5px;line-height:48px;height:48px;left:2428px;letter-spacing:0.482px;">Database</span>
<div class="a " style="left:2404px;top:238px;width:472px;height:2px;background:#1C1D1F;"></div>
<svg class="a" style="left:2427.0px;top:255.0px;" width="32" height="32" viewBox="0 0 16 16" fill="none"><path d="M8 1.700v12.600M1.700 8h12.600" stroke="#CED0D6" stroke-width="1" fill="none" stroke-linecap="round" stroke-linejoin="round"/></svg>
<svg class="a" style="left:2454.5px;top:282.5px;" width="7.5" height="7.5" viewBox="0 0 7.5 7.5" fill="none"><path d="M7.500 0v7.500H0z" fill="#CED0D6"/></svg>
<svg class="a" style="left:2480.0px;top:255.0px;" width="32" height="32" viewBox="0 0 16 16" fill="none"><path d="M5.200 1.600h6.300a2 2 0 0 1 2 2v7.200" stroke="#55575C" stroke-width="1" fill="none" stroke-linecap="round" stroke-linejoin="round"/><rect x="2.200" y="4" width="9.600" height="10.200" rx="2" stroke="#55575C"/><path d="M5 7.400h4M5 9.200h4M5 11h4" stroke="#55575C" stroke-width="1" fill="none" stroke-linecap="round" stroke-linejoin="round"/></svg>
<div class="a " style="left:2528px;top:253px;width:2px;height:39px;background:#3C3E43;"></div>
<svg class="a" style="left:2546.0px;top:256.0px;" width="32" height="32" viewBox="0 0 16 16" fill="none"><path d="M11.200 3.700A5.400 5.400 0 0 0 2.700 9.500M4.800 12.300A5.400 5.400 0 0 0 13.300 6.500" stroke="#CED0D6" stroke-width="1" fill="none" stroke-linecap="round" stroke-linejoin="round" /><path d="M0.400 7.300L2.700 9.700L5.200 7.500M15.600 8.700L13.300 6.300L10.800 8.500" stroke="#CED0D6" stroke-width="1" fill="none" stroke-linecap="round" stroke-linejoin="round" /></svg>
<svg class="a" style="left:2600.0px;top:256.0px;" width="32" height="32" viewBox="0 0 16 16" fill="none"><ellipse cx="7" cy="3.600" rx="5.700" ry="2.300" stroke="#CED0D6"/><path d="M1.300 3.600v8.600c0 1.100 1.700 2 4.200 2.300M12.700 3.600v3M1.300 6.600c0 1.200 2 2.100 4.900 2.300M1.300 9.500c0 1.100 1.700 2 4.200 2.300" stroke="#CED0D6" stroke-width="1" fill="none" stroke-linecap="round" stroke-linejoin="round"/><circle cx="11.100" cy="12" r="4.600" fill="#262729"/><path d="M14.94 11.33L14.94 12.67L13.90 12.77L13.62 13.44L14.29 14.24L13.34 15.19L12.54 14.52L11.87 14.80L11.77 15.84L10.43 15.84L10.33 14.80L9.66 14.52L8.86 15.19L7.91 14.24L8.58 13.44L8.30 12.77L7.26 12.67L7.26 11.33L8.30 11.23L8.58 10.56L7.91 9.76L8.86 8.81L9.66 9.48L10.33 9.20L10.43 8.16L11.77 8.16L11.87 9.20L12.54 9.48L13.34 8.81L14.29 9.76L13.62 10.56L13.90 11.23Z" fill="#25324D" stroke="#548AF7" stroke-width=".9" stroke-linejoin="round"/><circle cx="11.1" cy="12" r=".75" fill="#548AF7"/></svg>
<svg class="a" style="left:2652.0px;top:256.0px;" width="32" height="32" viewBox="0 0 16 16" fill="none"><path d="M7 13.300H3.700a2.200 2.200 0 0 1-2.200-2.200V4.900a2.200 2.200 0 0 1 2.200-2.200h6.600a2.200 2.200 0 0 1 2.200 2.200v4.300" stroke="#DB5C5C" stroke-width="1.100" fill="none" stroke-linecap="round"/><path d="M12.300 10.800v5H10.600a2.500 2.500 0 0 1 0-5z" fill="#CED0D6" stroke="#262729" stroke-width="1.400" paint-order="stroke"/><path d="M12.300 12h2.800M12.300 14.600h2.800M7.100 13.300h1" stroke="#CED0D6" stroke-width="1.2" fill="none" stroke-linecap="round" stroke-linejoin="round"/></svg>
<div class="a " style="left:2698px;top:253px;width:2px;height:39px;background:#3C3E43;"></div>
<svg class="a" style="left:2716.0px;top:256.0px;" width="32" height="32" viewBox="0 0 16 16" fill="none"><rect x="1.5" y="2.5" width="13" height="11" rx="1.5" stroke="#CED0D6"/><path d="M1.5 6H14.5M6 2.5V13.5M10 2.5V13.5" stroke="#CED0D6"/></svg>
<span class="a ui" id="t63" style="top:248.5px;line-height:48px;height:48px;left:2770.5px;font-size:22px;letter-spacing:-0.508px;">DDL</span>
<svg class="a" style="left:2827.5px;top:256.0px;" width="32" height="32" viewBox="0 0 16 16" fill="none"><path d="M6.25 4.5L9.75 8L6.25 11.5" stroke="#B4B8BF" stroke-width="1" fill="none" stroke-linecap="round" stroke-linejoin="round" /></svg>
<div class="a " style="left:2428px;top:890px;width:424px;height:48px;background:#3B3C40;border-radius:9px;"></div>
<svg class="a" style="left:2428.0px;top:321.5px;" width="32" height="32" viewBox="0 0 16 16" fill="none"><path d="M4.5 6.25L8 9.75L11.5 6.25" stroke="#A3A6AD" stroke-width="1" fill="none" stroke-linecap="round" stroke-linejoin="round" /></svg>
<svg class="a" style="left:2471.0px;top:323.0px;" width="32" height="32" viewBox="0 0 16 16" fill="none"><path d="M0.500 0.800C1.500 0.700 2.300 0.900 3 1.200C5 2 6.300 3.400 7.300 5C8.300 6.700 9.300 8.300 10.800 9.400C11.800 10.100 12.800 10.600 13.600 11.200M0.500 0.800C0.900 1.600 1.200 2.200 1.400 2.800C1.900 4.300 2.200 5.800 2.600 7.200C2.800 8.200 2.900 9 3 9.700L3.900 8.300L4.600 9.600L5.200 7.900L6.200 11C6.300 9.900 6.100 9 5.800 8.100C6.800 8.500 7.800 8.900 8.800 9.600C9.800 10.300 10.700 11 11.600 11.600" stroke="#0AA3E3" stroke-width=".75" fill="none" stroke-linecap="round" stroke-linejoin="round"/><circle cx="3.900" cy="3.300" r=".35" fill="#0AA3E3"/><circle cx="13.700" cy="13.700" r="2.300" fill="#262729"/><circle cx="13.700" cy="13.700" r="1.900" fill="#2BD42B"/></svg>
<span class="a ui" id="t64" style="top:314.5px;line-height:48px;height:48px;left:2514px;letter-spacing:0.609px;">@localhost</span>
<div class="a " style="left:2664px;top:319px;width:33px;height:40px;border-radius:7px;border:1.500px solid #34363A;box-sizing:border-box;"></div>
<span class="a ui" id="t65" style="top:316.0px;line-height:48px;height:48px;left:2664px;color:#5F6369;width:33px;text-align:center;font-size:22px;letter-spacing:-1px;text-indent:-1px;-webkit-text-stroke:0;">10</span>
<svg class="a" style="left:2465.5px;top:369.5px;" width="32" height="32" viewBox="0 0 16 16" fill="none"><path d="M6.25 4.5L9.75 8L6.25 11.5" stroke="#A3A6AD" stroke-width="1" fill="none" stroke-linecap="round" stroke-linejoin="round" /></svg>
<svg class="a" style="left:2508.0px;top:370.0px;" width="32" height="32" viewBox="0 0 16 16" fill="none"><path d="M11 4H5.200V8M8 11.500h3" stroke="#CED0D6" fill="none"/><rect x="11" y="2" width="4" height="4" rx=".7" stroke="#CED0D6" fill="#3A3C40"/><rect x="1.500" y="8" width="6.500" height="6" rx=".7" stroke="#CED0D6" fill="#3A3C40"/><rect x="11" y="9.500" width="4" height="4" rx=".7" stroke="#CED0D6" fill="#3A3C40"/></svg>
<span class="a ui" id="t66" style="top:362.5px;line-height:48px;height:48px;left:2552.5px;letter-spacing:0.648px;">ebean_test</span>
<svg class="a" style="left:2465.5px;top:417.5px;" width="32" height="32" viewBox="0 0 16 16" fill="none"><path d="M6.25 4.5L9.75 8L6.25 11.5" stroke="#A3A6AD" stroke-width="1" fill="none" stroke-linecap="round" stroke-linejoin="round" /></svg>
<svg class="a" style="left:2508.0px;top:418.0px;" width="32" height="32" viewBox="0 0 16 16" fill="none"><path d="M11 4H5.200V8M8 11.500h3" stroke="#CED0D6" fill="none"/><rect x="11" y="2" width="4" height="4" rx=".7" stroke="#CED0D6" fill="#3A3C40"/><rect x="1.500" y="8" width="6.500" height="6" rx=".7" stroke="#CED0D6" fill="#3A3C40"/><rect x="11" y="9.500" width="4" height="4" rx=".7" stroke="#CED0D6" fill="#3A3C40"/></svg>
<span class="a ui" id="t67" style="top:410.5px;line-height:48px;height:48px;left:2552.5px;letter-spacing:0.669px;">information_schema</span>
<svg class="a" style="left:2465.5px;top:465.5px;" width="32" height="32" viewBox="0 0 16 16" fill="none"><path d="M6.25 4.5L9.75 8L6.25 11.5" stroke="#A3A6AD" stroke-width="1" fill="none" stroke-linecap="round" stroke-linejoin="round" /></svg>
<svg class="a" style="left:2508.0px;top:466.0px;" width="32" height="32" viewBox="0 0 16 16" fill="none"><path d="M11 4H5.200V8M8 11.500h3" stroke="#CED0D6" fill="none"/><rect x="11" y="2" width="4" height="4" rx=".7" stroke="#CED0D6" fill="#3A3C40"/><rect x="1.500" y="8" width="6.500" height="6" rx=".7" stroke="#CED0D6" fill="#3A3C40"/><rect x="11" y="9.500" width="4" height="4" rx=".7" stroke="#CED0D6" fill="#3A3C40"/></svg>
<span class="a ui" id="t68" style="top:458.5px;line-height:48px;height:48px;left:2552.5px;letter-spacing:0.773px;">mysql</span>
<svg class="a" style="left:2465.5px;top:513.5px;" width="32" height="32" viewBox="0 0 16 16" fill="none"><path d="M6.25 4.5L9.75 8L6.25 11.5" stroke="#A3A6AD" stroke-width="1" fill="none" stroke-linecap="round" stroke-linejoin="round" /></svg>
<svg class="a" style="left:2508.0px;top:514.0px;" width="32" height="32" viewBox="0 0 16 16" fill="none"><path d="M11 4H5.200V8M8 11.500h3" stroke="#CED0D6" fill="none"/><rect x="11" y="2" width="4" height="4" rx=".7" stroke="#CED0D6" fill="#3A3C40"/><rect x="1.500" y="8" width="6.500" height="6" rx=".7" stroke="#CED0D6" fill="#3A3C40"/><rect x="11" y="9.500" width="4" height="4" rx=".7" stroke="#CED0D6" fill="#3A3C40"/></svg>
<span class="a ui" id="t69" style="top:506.5px;line-height:48px;height:48px;left:2552.5px;letter-spacing:0.664px;">onlineOrder</span>
<svg class="a" style="left:2465.5px;top:561.5px;" width="32" height="32" viewBox="0 0 16 16" fill="none"><path d="M6.25 4.5L9.75 8L6.25 11.5" stroke="#A3A6AD" stroke-width="1" fill="none" stroke-linecap="round" stroke-linejoin="round" /></svg>
<svg class="a" style="left:2508.0px;top:562.0px;" width="32" height="32" viewBox="0 0 16 16" fill="none"><path d="M11 4H5.200V8M8 11.500h3" stroke="#CED0D6" fill="none"/><rect x="11" y="2" width="4" height="4" rx=".7" stroke="#CED0D6" fill="#3A3C40"/><rect x="1.500" y="8" width="6.500" height="6" rx=".7" stroke="#CED0D6" fill="#3A3C40"/><rect x="11" y="9.500" width="4" height="4" rx=".7" stroke="#CED0D6" fill="#3A3C40"/></svg>
<span class="a ui" id="t70" style="top:554.5px;line-height:48px;height:48px;left:2552.5px;letter-spacing:0.678px;">performance_schema</span>
<svg class="a" style="left:2465.5px;top:609.5px;" width="32" height="32" viewBox="0 0 16 16" fill="none"><path d="M6.25 4.5L9.75 8L6.25 11.5" stroke="#A3A6AD" stroke-width="1" fill="none" stroke-linecap="round" stroke-linejoin="round" /></svg>
<svg class="a" style="left:2508.0px;top:610.0px;" width="32" height="32" viewBox="0 0 16 16" fill="none"><path d="M11 4H5.200V8M8 11.500h3" stroke="#CED0D6" fill="none"/><rect x="11" y="2" width="4" height="4" rx=".7" stroke="#CED0D6" fill="#3A3C40"/><rect x="1.500" y="8" width="6.500" height="6" rx=".7" stroke="#CED0D6" fill="#3A3C40"/><rect x="11" y="9.500" width="4" height="4" rx=".7" stroke="#CED0D6" fill="#3A3C40"/></svg>
<span class="a ui" id="t71" style="top:602.5px;line-height:48px;height:48px;left:2552.5px;letter-spacing:1.023px;">staybooking</span>
<svg class="a" style="left:2466.0px;top:657.5px;" width="32" height="32" viewBox="0 0 16 16" fill="none"><path d="M4.5 6.25L8 9.75L11.5 6.25" stroke="#A3A6AD" stroke-width="1" fill="none" stroke-linecap="round" stroke-linejoin="round" /></svg>
<svg class="a" style="left:2508.0px;top:658.0px;" width="32" height="32" viewBox="0 0 16 16" fill="none"><path d="M11 4H5.200V8M8 11.500h3" stroke="#CED0D6" fill="none"/><rect x="11" y="2" width="4" height="4" rx=".7" stroke="#CED0D6" fill="#3A3C40"/><rect x="1.500" y="8" width="6.500" height="6" rx=".7" stroke="#CED0D6" fill="#3A3C40"/><rect x="11" y="9.500" width="4" height="4" rx=".7" stroke="#CED0D6" fill="#3A3C40"/></svg>
<span class="a ui" id="t72" style="top:650.5px;line-height:48px;height:48px;left:2552.5px;letter-spacing:1.211px;">study</span>
<svg class="a" style="left:2465.5px;top:1041.5px;" width="32" height="32" viewBox="0 0 16 16" fill="none"><path d="M6.25 4.5L9.75 8L6.25 11.5" stroke="#A3A6AD" stroke-width="1" fill="none" stroke-linecap="round" stroke-linejoin="round" /></svg>
<svg class="a" style="left:2508.0px;top:1042.0px;" width="32" height="32" viewBox="0 0 16 16" fill="none"><path d="M11 4H5.200V8M8 11.500h3" stroke="#CED0D6" fill="none"/><rect x="11" y="2" width="4" height="4" rx=".7" stroke="#CED0D6" fill="#3A3C40"/><rect x="1.500" y="8" width="6.500" height="6" rx=".7" stroke="#CED0D6" fill="#3A3C40"/><rect x="11" y="9.500" width="4" height="4" rx=".7" stroke="#CED0D6" fill="#3A3C40"/></svg>
<span class="a ui" id="t73" style="top:1034.5px;line-height:48px;height:48px;left:2552.5px;letter-spacing:1.378px;">study2</span>
<svg class="a" style="left:2465.5px;top:1089.5px;" width="32" height="32" viewBox="0 0 16 16" fill="none"><path d="M6.25 4.5L9.75 8L6.25 11.5" stroke="#A3A6AD" stroke-width="1" fill="none" stroke-linecap="round" stroke-linejoin="round" /></svg>
<svg class="a" style="left:2508.0px;top:1090.0px;" width="32" height="32" viewBox="0 0 16 16" fill="none"><path d="M11 4H5.200V8M8 11.500h3" stroke="#CED0D6" fill="none"/><rect x="11" y="2" width="4" height="4" rx=".7" stroke="#CED0D6" fill="#3A3C40"/><rect x="1.500" y="8" width="6.500" height="6" rx=".7" stroke="#CED0D6" fill="#3A3C40"/><rect x="11" y="9.500" width="4" height="4" rx=".7" stroke="#CED0D6" fill="#3A3C40"/></svg>
<span class="a ui" id="t74" style="top:1082.5px;line-height:48px;height:48px;left:2552.5px;letter-spacing:1.478px;">study4</span>
<svg class="a" style="left:2465.5px;top:1137.5px;" width="32" height="32" viewBox="0 0 16 16" fill="none"><path d="M6.25 4.5L9.75 8L6.25 11.5" stroke="#A3A6AD" stroke-width="1" fill="none" stroke-linecap="round" stroke-linejoin="round" /></svg>
<svg class="a" style="left:2508.0px;top:1138.0px;" width="32" height="32" viewBox="0 0 16 16" fill="none"><path d="M11 4H5.200V8M8 11.500h3" stroke="#CED0D6" fill="none"/><rect x="11" y="2" width="4" height="4" rx=".7" stroke="#CED0D6" fill="#3A3C40"/><rect x="1.500" y="8" width="6.500" height="6" rx=".7" stroke="#CED0D6" fill="#3A3C40"/><rect x="11" y="9.500" width="4" height="4" rx=".7" stroke="#CED0D6" fill="#3A3C40"/></svg>
<span class="a ui" id="t75" style="top:1130.5px;line-height:48px;height:48px;left:2552.5px;letter-spacing:1.0px;">sys</span>
<svg class="a" style="left:2504.0px;top:705.5px;" width="32" height="32" viewBox="0 0 16 16" fill="none"><path d="M4.5 6.25L8 9.75L11.5 6.25" stroke="#A3A6AD" stroke-width="1" fill="none" stroke-linecap="round" stroke-linejoin="round" /></svg>
<svg class="a" style="left:2546.0px;top:706.0px;" width="32" height="32" viewBox="0 0 16 16" fill="none"><path d="M1.5 4.2a1.2 1.2 0 0 1 1.2-1.2h3.3a1 1 0 0 1 .75.33L8.2 4.9h5.1a1.2 1.2 0 0 1 1.2 1.2v6.2a1.2 1.2 0 0 1-1.2 1.2H2.7a1.2 1.2 0 0 1-1.2-1.2z" stroke="#548AF7" fill="#25324D" stroke-linejoin="round"/></svg>
<span class="a ui" id="t76" style="top:698.5px;line-height:48px;height:48px;left:2590.5px;letter-spacing:0.822px;">tables</span>
<span class="a ui" id="t77" style="top:699.5px;line-height:48px;height:48px;left:2679px;color:#5F6369;font-size:22px;-webkit-text-stroke:0;">4</span>
<svg class="a" style="left:2541.5px;top:753.5px;" width="32" height="32" viewBox="0 0 16 16" fill="none"><path d="M6.25 4.5L9.75 8L6.25 11.5" stroke="#A3A6AD" stroke-width="1" fill="none" stroke-linecap="round" stroke-linejoin="round" /></svg>
<svg class="a" style="left:2584.0px;top:754.0px;" width="32" height="32" viewBox="0 0 16 16" fill="none"><rect x="1.500" y="2.500" width="13" height="11" rx="1.700" stroke="#CED0D6" fill="#3A3C40"/><path d="M1.500 5.800H14.500M5.800 2.500V13.500M10.200 2.500V13.500" stroke="#CED0D6"/></svg>
<span class="a ui" id="t78" style="top:746.5px;line-height:48px;height:48px;left:2628.5px;letter-spacing:1.201px;">student</span>
<svg class="a" style="left:2541.5px;top:801.5px;" width="32" height="32" viewBox="0 0 16 16" fill="none"><path d="M6.25 4.5L9.75 8L6.25 11.5" stroke="#A3A6AD" stroke-width="1" fill="none" stroke-linecap="round" stroke-linejoin="round" /></svg>
<svg class="a" style="left:2584.0px;top:802.0px;" width="32" height="32" viewBox="0 0 16 16" fill="none"><rect x="1.500" y="2.500" width="13" height="11" rx="1.700" stroke="#CED0D6" fill="#3A3C40"/><path d="M1.500 5.800H14.500M5.800 2.500V13.500M10.200 2.500V13.500" stroke="#CED0D6"/></svg>
<span class="a ui" id="t79" style="top:794.5px;line-height:48px;height:48px;left:2628.5px;letter-spacing:0.973px;">teach</span>
<svg class="a" style="left:2541.5px;top:849.5px;" width="32" height="32" viewBox="0 0 16 16" fill="none"><path d="M6.25 4.5L9.75 8L6.25 11.5" stroke="#A3A6AD" stroke-width="1" fill="none" stroke-linecap="round" stroke-linejoin="round" /></svg>
<svg class="a" style="left:2584.0px;top:850.0px;" width="32" height="32" viewBox="0 0 16 16" fill="none"><rect x="1.500" y="2.500" width="13" height="11" rx="1.700" stroke="#CED0D6" fill="#3A3C40"/><path d="M1.500 5.800H14.500M5.800 2.500V13.500M10.200 2.500V13.500" stroke="#CED0D6"/></svg>
<span class="a ui" id="t80" style="top:842.5px;line-height:48px;height:48px;left:2628.5px;letter-spacing:0.961px;">teacher</span>
<svg class="a" style="left:2542.0px;top:897.5px;" width="32" height="32" viewBox="0 0 16 16" fill="none"><path d="M4.5 6.25L8 9.75L11.5 6.25" stroke="#A3A6AD" stroke-width="1" fill="none" stroke-linecap="round" stroke-linejoin="round" /></svg>
<svg class="a" style="left:2584.0px;top:898.0px;" width="32" height="32" viewBox="0 0 16 16" fill="none"><rect x="1.500" y="2.500" width="13" height="11" rx="1.700" stroke="#CED0D6" fill="#3A3C40"/><path d="M1.500 5.800H14.500M5.800 2.500V13.500M10.200 2.500V13.500" stroke="#CED0D6"/></svg>
<span class="a ui" id="t81" style="top:890.5px;line-height:48px;height:48px;left:2628.5px;letter-spacing:0.474px;">user</span>
<svg class="a" style="left:2579.0px;top:945.5px;" width="32" height="32" viewBox="0 0 16 16" fill="none"><path d="M6.25 4.5L9.75 8L6.25 11.5" stroke="#A3A6AD" stroke-width="1" fill="none" stroke-linecap="round" stroke-linejoin="round" /></svg>
<svg class="a" style="left:2622.0px;top:946.0px;" width="32" height="32" viewBox="0 0 16 16" fill="none"><path d="M1.5 4.2a1.2 1.2 0 0 1 1.2-1.2h3.3a1 1 0 0 1 .75.33L8.2 4.9h5.1a1.2 1.2 0 0 1 1.2 1.2v6.2a1.2 1.2 0 0 1-1.2 1.2H2.7a1.2 1.2 0 0 1-1.2-1.2z" stroke="#548AF7" fill="#25324D" stroke-linejoin="round"/></svg>
<span class="a ui" id="t82" style="top:938.5px;line-height:48px;height:48px;left:2666.5px;letter-spacing:0.695px;">columns</span>
<span class="a ui" id="t83" style="top:939.5px;line-height:48px;height:48px;left:2782.5px;color:#5F6369;font-size:22px;-webkit-text-stroke:0;">2</span>
<svg class="a" style="left:2503.5px;top:993.5px;" width="32" height="32" viewBox="0 0 16 16" fill="none"><path d="M6.25 4.5L9.75 8L6.25 11.5" stroke="#A3A6AD" stroke-width="1" fill="none" stroke-linecap="round" stroke-linejoin="round" /></svg>
<svg class="a" style="left:2546.0px;top:994.0px;" width="32" height="32" viewBox="0 0 16 16" fill="none"><path d="M1.5 4.2a1.2 1.2 0 0 1 1.2-1.2h3.3a1 1 0 0 1 .75.33L8.2 4.9h5.1a1.2 1.2 0 0 1 1.2 1.2v6.2a1.2 1.2 0 0 1-1.2 1.2H2.7a1.2 1.2 0 0 1-1.2-1.2z" stroke="#548AF7" fill="#25324D" stroke-linejoin="round"/></svg>
<span class="a ui" id="t84" style="top:986.5px;line-height:48px;height:48px;left:2590.5px;letter-spacing:1.121px;">views</span>
<span class="a ui" id="t85" style="top:987.5px;line-height:48px;height:48px;left:2675px;color:#5F6369;font-size:22px;-webkit-text-stroke:0;">2</span>
<svg class="a" style="left:2465.5px;top:1185.5px;" width="32" height="32" viewBox="0 0 16 16" fill="none"><path d="M6.25 4.5L9.75 8L6.25 11.5" stroke="#A3A6AD" stroke-width="1" fill="none" stroke-linecap="round" stroke-linejoin="round" /></svg>
<svg class="a" style="left:2509.0px;top:1186.0px;" width="32" height="32" viewBox="0 0 16 16" fill="none"><path d="M6.800 13.500H2.700a1.200 1.200 0 0 1-1.200-1.200V4.200a1.200 1.200 0 0 1 1.200-1.200h3.300a1 1 0 0 1 .75.33L8.200 4.900h5.100a1.200 1.200 0 0 1 1.200 1.200v1.400" stroke="#CED0D6" fill="#3A3C40" stroke-linejoin="round" stroke-linecap="round"/><rect x="8.500" y="9" width="7.500" height="3" rx=".6" fill="#548AF7"/><rect x="8.500" y="13" width="7.500" height="3" rx=".6" fill="#548AF7"/><path d="M9.800 10.500h1.600M9.800 14.500h1.600" stroke="#262729" stroke-width=".9"/></svg>
<span class="a ui" id="t86" style="top:1178.5px;line-height:48px;height:48px;left:2552.5px;letter-spacing:0.773px;">Server Objects</span>
<span class="a ui b" id="t87" style="top:1659.0px;line-height:48px;height:48px;left:218px;letter-spacing:-1.273px;">Run</span>
<svg class="a" style="left:322.0px;top:1666.0px;" width="32" height="32" viewBox="0 0 16 16" fill="none"><rect x="1.75" y="2.6" width="12.6" height="10.6" rx="2" stroke="#3A5C9E" fill="#212634"/><path d="M3.8 5.5H5.3M6.6 5.5H8.2" stroke="#3A5C9E"/></svg>
<span class="a ui" id="t88" style="top:1659.5px;line-height:48px;height:48px;left:363px;letter-spacing:0.547px;">Main</span>
<svg class="a" style="left:437.5px;top:1668.0px;" width="32" height="32" viewBox="0 0 16 16" fill="none"><path d="M4.8 4.8L11.2 11.2M11.2 4.8L4.8 11.2" stroke="#7E8288" stroke-width="1" fill="none" stroke-linecap="round" stroke-linejoin="round" /></svg>
<div class="a " style="left:194px;top:1722px;width:2682px;height:2px;background:#1C1D1F;"></div>
<div class="a " style="left:298px;top:1718px;width:186px;height:6px;background:#505358;border-radius:3px;"></div>
<svg class="a" style="left:204.5px;top:1743.5px;" width="32" height="32" viewBox="0 0 16 16" fill="none"><path d="M12.600 0.900V5.250H8.500" stroke="#B4B8BF" stroke-width="1" fill="none" stroke-linecap="round" stroke-linejoin="round"/><path d="M12.300 5.300A5.400 5.400 0 1 0 6.300 13" stroke="#B4B8BF" stroke-width="1" fill="none" stroke-linecap="round" stroke-linejoin="round"/><path d="M8.300 8.600a.5.500 0 0 1 .75-.43l5.400 3.150a.5.500 0 0 1 0 .86l-5.400 3.150a.5.500 0 0 1-.75-.43z" stroke="#55A35D" fill="#253627" stroke-linejoin="round"/></svg>
<div class="a " style="left:260px;top:1746.5px;width:24px;height:24px;background:#4E5155;border-radius:4px;"></div>
<div class="a " style="left:304px;top:1738px;width:2px;height:39px;background:#3C3E43;"></div>
<svg class="a" style="left:322.0px;top:1742.5px;" width="32" height="32" viewBox="0 0 16 16" fill="none"><path d="M1.500 5.700a1.500 1.500 0 0 1 1.500-1.500h1.700l1-1.700h4.600l1 1.700H13a1.500 1.500 0 0 1 1.500 1.500v6.100a1.500 1.500 0 0 1-1.500 1.500H3a1.500 1.500 0 0 1-1.500-1.500z" stroke="#4E5155" stroke-linejoin="round"/><circle cx="8" cy="8.600" r="2.600" stroke="#4E5155"/><circle cx="12.100" cy="6.300" r=".7" fill="#4E5155"/></svg>
<svg class="a" style="left:375.0px;top:1742.5px;" width="32" height="32" viewBox="0 0 16 16" fill="none"><path d="M5.500 4.500V3.200a1.500 1.500 0 0 1 1.500-1.500h5.300a1.500 1.500 0 0 1 1.500 1.500v9.600a1.500 1.500 0 0 1-1.500 1.500H7a1.500 1.500 0 0 1-1.500-1.500v-1.300M1.800 8h8.400M7.300 5l3 3-3 3" stroke="#4E5155" stroke-width="1" fill="none" stroke-linecap="round" stroke-linejoin="round"/></svg>
<svg class="a" style="left:426.5px;top:1742.5px;" width="32" height="32" viewBox="0 0 16 16" fill="none"><path d="M2.300 13.300a6.600 6.600 0 1 1 11.400 0zM8.900 8.900l3-2.800" stroke="#4E5155" stroke-width="1" fill="none" stroke-linecap="round" stroke-linejoin="round"/><circle cx="8" cy="9.700" r="1.300" stroke="#4E5155"/><path d="M16.200 12.500v4h-4z" fill="#4E5155"/></svg>
<svg class="a" style="left:474.0px;top:1738.5px;" width="40" height="40" viewBox="0 0 20 20" fill="none"><circle cx="10" cy="4.7" r="1.1" fill="#CED0D6"/><circle cx="10" cy="10" r="1.1" fill="#CED0D6"/><circle cx="10" cy="15.3" r="1.1" fill="#CED0D6"/></svg>
<div class="a " style="left:194px;top:1793px;width:64px;height:390px;background:#262729;"></div>
<div class="a " style="left:258px;top:1793px;width:2590px;height:390px;background:#1C1D1F;"></div>
<div class="a " style="left:194px;top:1792px;width:2682px;height:1px;background:#1C1D1F;"></div>
<svg class="a" style="left:210.0px;top:1818.0px;" width="32" height="32" viewBox="0 0 16 16" fill="none"><path d="M8 13.800V2.600M3.400 7.200L8 2.600l4.600 4.600" stroke="#CED0D6" stroke-width="1" fill="none" stroke-linecap="round" stroke-linejoin="round"/></svg>
<svg class="a" style="left:210.0px;top:1870.0px;" width="32" height="32" viewBox="0 0 16 16" fill="none"><path d="M8 2.200v11.200M3.400 8.800L8 13.400l4.600-4.600" stroke="#CED0D6" stroke-width="1" fill="none" stroke-linecap="round" stroke-linejoin="round"/></svg>
<svg class="a" style="left:210.0px;top:1923.5px;" width="32" height="32" viewBox="0 0 16 16" fill="none"><path d="M1 2.200h14M1 7.300h10.800a2.600 2.600 0 0 1 0 5.200H8.500M1 12.500h3.800M10.300 10.500l-2 2 2 2" stroke="#CED0D6" stroke-width="1" fill="none" stroke-linecap="round" stroke-linejoin="round"/></svg>
<div class="a " style="left:204px;top:1968px;width:44px;height:44px;background:#3D3F44;border-radius:8px;"></div>
<svg class="a" style="left:210.0px;top:1974.0px;" width="32" height="32" viewBox="0 0 16 16" fill="none"><path d="M1 3.500h5M1 8h5M1 13.300h14M11.300 2.500v7.800M8 7.200l3.300 3.300 3.300-3.300" stroke="#CED0D6" stroke-width="1" fill="none" stroke-linecap="round" stroke-linejoin="round"/></svg>
<svg class="a" style="left:210.0px;top:2026.0px;" width="32" height="32" viewBox="0 0 16 16" fill="none"><path d="M4.200 5.300V2h7.600v3.300M4.200 11.800H2.400a1.400 1.400 0 0 1-1.400-1.400V6.700a1.400 1.400 0 0 1 1.400-1.400h11.200a1.400 1.400 0 0 1 1.400 1.400v3.700a1.400 1.400 0 0 1-1.400 1.400h-1.800M4.200 9.200h7.600v5H4.200z" stroke="#CED0D6" stroke-width="1" fill="none" stroke-linecap="round" stroke-linejoin="round"/><circle cx="12.700" cy="7.500" r=".7" fill="#CED0D6"/></svg>
<svg class="a" style="left:210.0px;top:2078.0px;" width="32" height="32" viewBox="0 0 16 16" fill="none"><path d="M1.700 4.300h12.600M5.700 4.100V3.200a1.500 1.500 0 0 1 1.500-1.500h1.600a1.500 1.500 0 0 1 1.500 1.500v.9M2.900 4.500l.5 8.700a1.500 1.500 0 0 0 1.500 1.400h6.200a1.500 1.500 0 0 0 1.500-1.400l.5-8.700M6.700 7.300v4.400M9.300 7.300v4.400" stroke="#CED0D6" stroke-width="1" fill="none" stroke-linecap="round" stroke-linejoin="round"/></svg>
<div class="a mono cl" style="left:282.500px;top:1797px;width:2565px;overflow:hidden;">/Users/eve/Library/Java/JavaVirtualMachines/openjdk-21.0.1-1/Contents/Home/bin/java -javaagent:/Applications/IntelliJ IDEA.app/Contents/lib/idea_rt.jar=52498:/Applications/IntelliJ IDEA.app/Contents/bin</div>
<div class="a mono cl" style="left:282.500px;top:1885px;">Process finished with exit code 0</div>
<div class="a " style="left:282px;top:2154px;width:2566px;height:29px;background:#34383A;"></div>
<div class="a " style="left:288px;top:2160px;width:944px;height:16px;background:#525456;border-radius:8px;"></div>
<div class="a " style="left:2848px;top:1793px;width:28px;height:361px;background:#34383A;"></div>
<div class="a " style="left:2848px;top:2154px;width:28px;height:29px;background:#2A2C2E;"></div>
<svg class="a" style="left:132.0px;top:2195.5px;" width="32" height="32" viewBox="0 0 16 16" fill="none"><rect x="4.550" y="4.550" width="6.900" height="6.900" rx="1.600" fill="#1F2940" stroke="#4A88F5" stroke-width="1.100"/></svg>
<span class="a ui" id="t89" style="top:2186.5px;line-height:48px;height:48px;left:164.5px;color:#A0A3AA;letter-spacing:-0.302px;">JDBC</span>
<svg class="a" style="left:241.5px;top:2194.5px;" width="32" height="32" viewBox="0 0 16 16" fill="none"><path d="M6.25 4.5L9.75 8L6.25 11.5" stroke="#9DA0A8" stroke-width="1" fill="none" stroke-linecap="round" stroke-linejoin="round" /></svg>
<span class="a ui" id="t90" style="top:2186.5px;line-height:48px;height:48px;left:282.5px;color:#A0A3AA;letter-spacing:0.914px;">src</span>
<svg class="a" style="left:327.5px;top:2194.5px;" width="32" height="32" viewBox="0 0 16 16" fill="none"><path d="M6.25 4.5L9.75 8L6.25 11.5" stroke="#9DA0A8" stroke-width="1" fill="none" stroke-linecap="round" stroke-linejoin="round" /></svg>
<svg class="a" style="left:368.0px;top:2194.5px;" width="32" height="32" viewBox="0 0 16 16" fill="none"><circle cx="8" cy="8" r="6.5" stroke="#548AF7" fill="#25324D"/><path d="M10.2 9.6A2.6 2.6 0 1 1 10.2 6.4" stroke="#548AF7" stroke-width="1" fill="none" stroke-linecap="round"/></svg>
<span class="a ui" id="t91" style="top:2186.5px;line-height:48px;height:48px;left:409px;color:#A0A3AA;letter-spacing:0.38px;">Main</span>
<svg class="a" style="left:2364px;top:2198px;" width="28" height="27" viewBox="0 0 28 27" fill="none"><defs><linearGradient id="vg" x1="0" y1="0" x2="1" y2="1"><stop offset="0" stop-color="#3BEA62"/><stop offset=".5" stop-color="#18C4A0"/><stop offset="1" stop-color="#087CFA"/></linearGradient></defs><path d="M1 1h8.500l1.500 14L18.500 1H27L14 26H3.500z" fill="url(#vg)"/></svg>
<svg class="a" style="left:2426px;top:2195.5px;" width="32" height="32" viewBox="0 0 32 32" fill="none"><path d="M22.0 16.0L29.0 16.0" stroke="#9DA0A8" stroke-opacity="0.35" stroke-width="3.2" stroke-linecap="round"/><path d="M20.2 20.2L25.2 25.2" stroke="#9DA0A8" stroke-opacity="0.42" stroke-width="3.2" stroke-linecap="round"/><path d="M16.0 22.0L16.0 29.0" stroke="#9DA0A8" stroke-opacity="0.5" stroke-width="3.2" stroke-linecap="round"/><path d="M11.8 20.2L6.8 25.2" stroke="#9DA0A8" stroke-opacity="0.6" stroke-width="3.2" stroke-linecap="round"/><path d="M10.0 16.0L3.0 16.0" stroke="#9DA0A8" stroke-opacity="0.3" stroke-width="3.2" stroke-linecap="round"/><path d="M11.8 11.8L6.8 6.8" stroke="#9DA0A8" stroke-opacity="0.3" stroke-width="3.2" stroke-linecap="round"/><path d="M16.0 10.0L16.0 3.0" stroke="#9DA0A8" stroke-opacity="0.3" stroke-width="3.2" stroke-linecap="round"/><path d="M20.2 11.8L25.2 6.8" stroke="#9DA0A8" stroke-opacity="0.32" stroke-width="3.2" stroke-linecap="round"/></svg>
<span class="a ui" id="t92" style="top:2186.5px;line-height:48px;height:48px;left:2490px;color:#A0A3AA;letter-spacing:-0.036px;">22:1</span>
<span class="a ui" id="t93" style="top:2186.5px;line-height:48px;height:48px;left:2572.5px;color:#A0A3AA;letter-spacing:-1.344px;">LF</span>
<span class="a ui" id="t94" style="top:2186.5px;line-height:48px;height:48px;left:2634.5px;color:#A0A3AA;letter-spacing:1.207px;">UTF-8</span>
<span class="a ui" id="t95" style="top:2186.5px;line-height:48px;height:48px;left:2746.5px;color:#A0A3AA;letter-spacing:0.917px;">4 spaces</span>
<svg class="a" style="left:2892.5px;top:2194.5px;" width="32" height="32" viewBox="0 0 16 16" fill="none"><rect x="1.800" y="6.800" width="9" height="7.200" rx="1.500" stroke="#CED0D6" stroke-width="1.100"/><path d="M8 6.800V5.500a2.900 2.900 0 0 1 5.800 0V6.300M6.300 9.500v2" stroke="#CED0D6" stroke-width="1.100" stroke-linecap="round" fill="none"/></svg>
</div><div id="rim"></div></div>
</body></html>
